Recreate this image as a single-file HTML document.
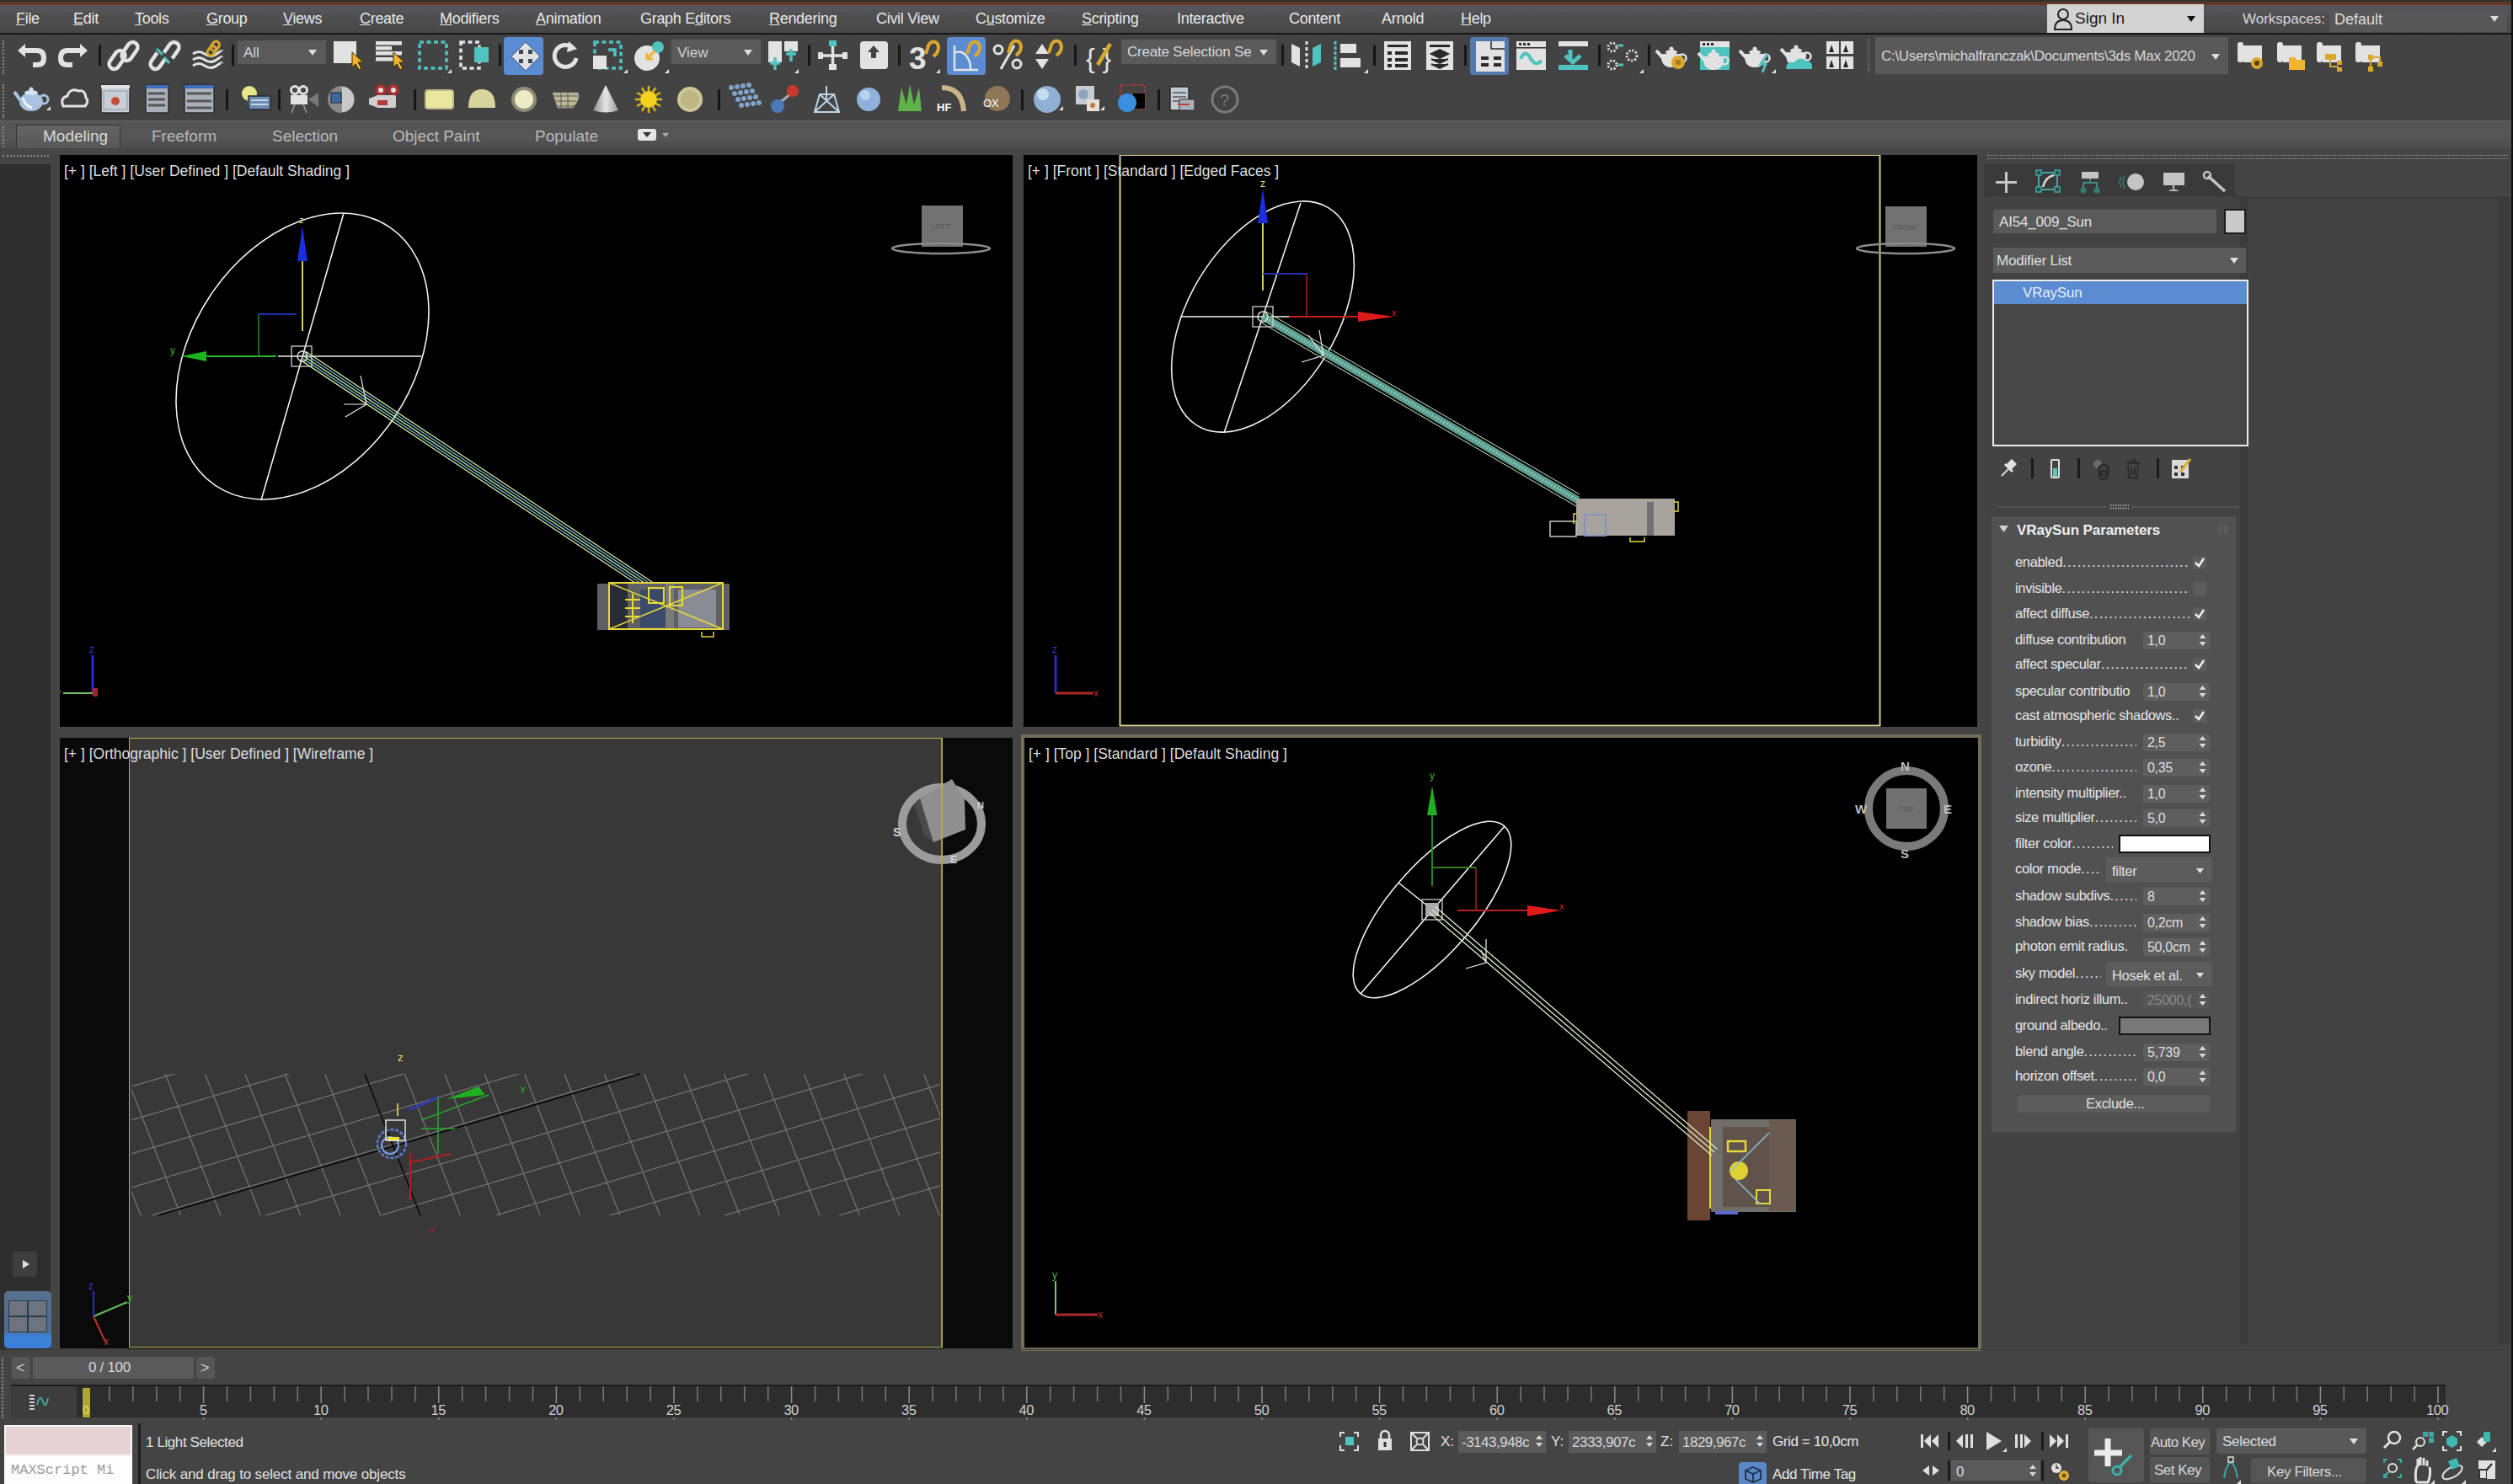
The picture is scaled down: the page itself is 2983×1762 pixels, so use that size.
<!DOCTYPE html>
<html><head><meta charset="utf-8">
<style>
*{margin:0;padding:0;box-sizing:border-box}
html,body{width:2983px;height:1762px;overflow:hidden;background:#444444;font-family:"Liberation Sans",sans-serif;color:#dcdcdc;position:relative}
.a{position:absolute}
.t{position:absolute;white-space:pre;line-height:1}
.vp{position:absolute;background:#000;overflow:hidden}
.lbl{position:absolute;white-space:pre;font-size:17px;color:#dedede;line-height:1}
.sep{position:absolute;width:3px;height:28px;background:#1c1c1c}
svg{position:absolute;overflow:visible}

</style></head>
<body>
<!-- top stripe -->
<div class="a" style="left:0;top:0;width:2983px;height:2px;background:#2f3230"></div>
<div class="a" style="left:0;top:2px;width:2983px;height:4px;background:#643722"></div>
<div class="a" style="left:0;top:6px;width:2983px;height:8px;background:#55545a"></div>
<div class="a" style="left:0;top:14px;width:2983px;height:25px;background:linear-gradient(#525252,#464646)"></div>
<div class="a" style="left:0;top:39px;width:2983px;height:2px;background:#161616"></div>
<div class="a" style="left:0;top:41px;width:2983px;height:102px;background:#434343"></div>
<div class="a" style="left:0;top:143px;width:2983px;height:32px;background:linear-gradient(#5e5e5e 0,#5e5e5e 2px,#555 2px,#555 25px,#4f4f4f 25px)"></div><div class="a" style="left:0;top:175px;width:2983px;height:9px;background:#474747"></div>
<!-- toolbar grips -->
<div class="a" style="left:3px;top:48px;width:4px;height:40px;border-left:2px dotted #8a8a8a"></div>
<div class="a" style="left:3px;top:100px;width:4px;height:40px;border-left:2px dotted #8a8a8a"></div>
<div class="a" style="left:3px;top:150px;width:4px;height:25px;border-left:2px dotted #8a8a8a"></div>
<div class="a" style="left:3px;top:184px;width:55px;height:5px;border-top:2px dotted #8a8a8a"></div>
<!-- left panel -->
<div class="a" style="left:0;top:195px;width:60px;height:1407px;background:#2e2e2e"></div>
<!-- play button -->
<div class="a" style="left:15px;top:1486px;width:29px;height:30px;background:#3e3e3e;border-radius:3px"></div>
<svg style="left:15px;top:1486px" width="29" height="30"><path d="M12 10 L20 15 L12 20 Z" fill="#e0e0e0"/></svg>
<!-- viewport layout button -->
<div class="a" style="left:5px;top:1533px;width:56px;height:68px;background:linear-gradient(#56708f,#4f6c92 70%,#3d80d8 78%,#3d80d8);border-radius:5px"></div>
<div class="a" style="left:10px;top:1544px;width:23px;height:19px;background:#6d7480;border:1px solid #2d3a4c"></div>
<div class="a" style="left:33px;top:1544px;width:23px;height:19px;background:#6d7480;border:1px solid #2d3a4c"></div>
<div class="a" style="left:10px;top:1563px;width:23px;height:19px;background:#6d7480;border:1px solid #2d3a4c"></div>
<div class="a" style="left:33px;top:1563px;width:23px;height:19px;background:#6d7480;border:1px solid #2d3a4c"></div>

<div class="t" style="left:19px;top:13px;font-size:18px;color:#e8e8e8;letter-spacing:-0.3px"><u>F</u>ile</div>
<div class="t" style="left:87px;top:13px;font-size:18px;color:#e8e8e8;letter-spacing:-0.3px"><u>E</u>dit</div>
<div class="t" style="left:160px;top:13px;font-size:18px;color:#e8e8e8;letter-spacing:-0.3px"><u>T</u>ools</div>
<div class="t" style="left:245px;top:13px;font-size:18px;color:#e8e8e8;letter-spacing:-0.3px"><u>G</u>roup</div>
<div class="t" style="left:336px;top:13px;font-size:18px;color:#e8e8e8;letter-spacing:-0.3px"><u>V</u>iews</div>
<div class="t" style="left:427px;top:13px;font-size:18px;color:#e8e8e8;letter-spacing:-0.3px"><u>C</u>reate</div>
<div class="t" style="left:522px;top:13px;font-size:18px;color:#e8e8e8;letter-spacing:-0.3px"><u>M</u>odifiers</div>
<div class="t" style="left:636px;top:13px;font-size:18px;color:#e8e8e8;letter-spacing:-0.3px"><u>A</u>nimation</div>
<div class="t" style="left:760px;top:13px;font-size:18px;color:#e8e8e8;letter-spacing:-0.3px">Graph E<u>d</u>itors</div>
<div class="t" style="left:913px;top:13px;font-size:18px;color:#e8e8e8;letter-spacing:-0.3px"><u>R</u>endering</div>
<div class="t" style="left:1040px;top:13px;font-size:18px;color:#e8e8e8;letter-spacing:-0.3px">Civil View</div>
<div class="t" style="left:1158px;top:13px;font-size:18px;color:#e8e8e8;letter-spacing:-0.3px">C<u>u</u>stomize</div>
<div class="t" style="left:1284px;top:13px;font-size:18px;color:#e8e8e8;letter-spacing:-0.3px"><u>S</u>cripting</div>
<div class="t" style="left:1397px;top:13px;font-size:18px;color:#e8e8e8;letter-spacing:-0.3px">Interactive</div>
<div class="t" style="left:1530px;top:13px;font-size:18px;color:#e8e8e8;letter-spacing:-0.3px">Content</div>
<div class="t" style="left:1640px;top:13px;font-size:18px;color:#e8e8e8;letter-spacing:-0.3px">Arnold</div>
<div class="t" style="left:1734px;top:13px;font-size:18px;color:#e8e8e8;letter-spacing:-0.3px"><u>H</u>elp</div>
<!-- sign in -->
<div class="a" style="left:2430px;top:5px;width:186px;height:34px;background:#d2d2d2"></div>
<svg style="left:2436px;top:7px" width="26" height="30"><circle cx="13" cy="10" r="6" fill="none" stroke="#222" stroke-width="2"/><path d="M3 28 Q3 17 13 17 Q23 17 23 28 Z" fill="none" stroke="#222" stroke-width="2"/></svg>
<div class="t" style="left:2463px;top:12px;font-size:19px;color:#1a1a1a">Sign In</div>
<svg style="left:2596px;top:19px" width="10" height="8"><path d="M0 0 L10 0 L5 7 Z" fill="#111"/></svg>
<div class="t" style="left:2662px;top:14px;font-size:17px;color:#d8d8d8">Workspaces:</div>
<div class="a" style="left:2765px;top:13px;width:211px;height:25px;background:#575757"></div>
<div class="t" style="left:2771px;top:14px;font-size:18px;color:#dcdcdc">Default</div>
<svg style="left:2956px;top:19px" width="10" height="8"><path d="M0 0 L10 0 L5 7 Z" fill="#ddd"/></svg>

<svg style="left:0;top:0" width="2983" height="143"><rect x="117" y="53" width="3" height="25" fill="#161616"/><rect x="275" y="53" width="3" height="25" fill="#161616"/><rect x="592" y="53" width="3" height="25" fill="#161616"/><rect x="959" y="53" width="3" height="25" fill="#161616"/><rect x="1066" y="53" width="3" height="25" fill="#161616"/><rect x="1275" y="53" width="3" height="25" fill="#161616"/><rect x="1521" y="53" width="3" height="25" fill="#161616"/><rect x="1630" y="53" width="3" height="25" fill="#161616"/><rect x="1738" y="53" width="3" height="25" fill="#161616"/><rect x="1897" y="53" width="3" height="25" fill="#161616"/><rect x="1956" y="53" width="3" height="25" fill="#161616"/><path d="M29 60 H44 Q52 60 52 69 Q52 77 44 77 H39" fill="none" stroke="#e2e2e2" stroke-width="6"/><path d="M21 60 L30 52 L30 68 Z" fill="#e2e2e2"/><path d="M96 60 H80 Q72 60 72 69 Q72 77 80 77 H86" fill="none" stroke="#e2e2e2" stroke-width="6"/><path d="M104 60 L95 52 L95 68 Z" fill="#e2e2e2"/><g transform="rotate(-55 154 61)"><rect x="142" y="55" width="24" height="12" rx="6" fill="none" stroke="#e2e2e2" stroke-width="4.5"/></g><g transform="rotate(-55 139 71)"><rect x="127" y="65" width="24" height="12" rx="6" fill="none" stroke="#e2e2e2" stroke-width="4.5"/></g><g transform="rotate(-55 203 61)"><path d="M197 55 H209 A6 6 0 0 1 209 67 H197" fill="none" stroke="#e2e2e2" stroke-width="4.5"/></g><g transform="rotate(-55 188 71)"><path d="M194 65 H182 A6 6 0 0 0 182 77 H194" fill="none" stroke="#e2e2e2" stroke-width="4.5"/></g><path d="M186 58 L193 65 M195 68 L201 75" stroke="#4fc3c0" stroke-width="3"/><path d="M229 64 Q236 59 243 64 T257 64 T263 61" fill="none" stroke="#e2e2e2" stroke-width="3"/><path d="M229 71 Q236 66 243 71 T257 71 T263 68" fill="none" stroke="#e2e2e2" stroke-width="3"/><path d="M229 78 Q236 73 243 78 T257 78 T263 75" fill="none" stroke="#e2e2e2" stroke-width="3"/><g transform="rotate(-55 253 58)"><rect x="244" y="54" width="12" height="8" rx="4" fill="none" stroke="#d9a72e" stroke-width="3"/><rect x="251" y="54" width="12" height="8" rx="4" fill="none" stroke="#d9a72e" stroke-width="3"/></g><rect x="396" y="49" width="27" height="26" fill="#e2e2e2"/><path d="M418 62 L418 80 L422 76 L426 83 L429 81 L425 74 L431 74 Z" fill="#f1b431" stroke="#3a2a00" stroke-width="1"/><rect x="446" y="49" width="31" height="4.5" fill="#e2e2e2"/><rect x="446" y="55" width="19" height="4.5" fill="#e2e2e2"/><rect x="446" y="61" width="31" height="4.5" fill="#e2e2e2"/><rect x="446" y="68" width="22" height="4.5" fill="#e2e2e2"/><path d="M467 62 L467 80 L471 76 L475 83 L478 81 L474 74 L480 74 Z" fill="#f1b431" stroke="#3a2a00" stroke-width="1"/><rect x="498" y="50" width="32" height="31" fill="none" stroke="#4fc3c0" stroke-width="3.5" stroke-dasharray="5 3.5"/><path d="M531 87 L536 82 L536 87 Z" fill="#e2e2e2"/><rect x="547" y="50" width="22" height="31" fill="none" stroke="#e2e2e2" stroke-width="3.5" stroke-dasharray="5 3.5"/><rect x="563" y="56" width="17" height="18" fill="#4fc3c0"/><rect x="598" y="44" width="47" height="45" rx="4" fill="#5b8bd3"/><path d="M624 50 L641 67 L624 84 L607 67 Z" fill="#e2e2e2" stroke="#35507a" stroke-width="1"/><rect x="616" y="59" width="5" height="5" fill="#3d4a5c"/><rect x="627" y="59" width="5" height="5" fill="#3d4a5c"/><rect x="616" y="70" width="5" height="5" fill="#3d4a5c"/><rect x="627" y="70" width="5" height="5" fill="#3d4a5c"/><path d="M679 56 A13 13 0 1 0 684 69" fill="none" stroke="#e2e2e2" stroke-width="5"/><path d="M675 49 L685 58 L673 62 Z" fill="#e2e2e2"/><rect x="706" y="50" width="31" height="31" fill="none" stroke="#4fc3c0" stroke-width="3.5" stroke-dasharray="5 3.5"/><rect x="704" y="66" width="16" height="16" fill="#e2e2e2"/><path d="M722 59 H730 V67" fill="none" stroke="#4fc3c0" stroke-width="3.5"/><path d="M740 87 L745 82 L745 87 Z" fill="#e2e2e2"/><circle cx="768" cy="69" r="15" fill="#e2e2e2"/><circle cx="781" cy="56" r="7" fill="#4fc3c0"/><path d="M778 60 L769 69 M768 63 L768 70 L775 70" fill="none" stroke="#f1b431" stroke-width="3"/><path d="M789 87 L794 82 L794 87 Z" fill="#e2e2e2"/><rect x="912" y="49" width="16" height="25" fill="#e2e2e2"/><rect x="931" y="49" width="16" height="12" fill="#e2e2e2"/><path d="M920 68 V83 M914 75 H926 M939 58 V73 M933 64 H945" stroke="#4fc3c0" stroke-width="3.5"/><path d="M943 87 L948 82 L948 87 Z" fill="#e2e2e2"/><path d="M971 66 H1006 M988.5 49 V82" stroke="#e2e2e2" stroke-width="3.5"/><rect x="971" y="62" width="6" height="8" fill="#e2e2e2"/><rect x="1000" y="62" width="6" height="8" fill="#e2e2e2"/><rect x="984" y="76" width="9" height="7" fill="#e2e2e2"/><rect x="984" y="48" width="9" height="7" fill="#4fc3c0"/><rect x="1021" y="49" width="33" height="33" rx="4" fill="#e2e2e2"/><path d="M1037 54 L1044 62 H1040 V69 H1034 V62 H1030 Z" fill="#444"/><text x="1079" y="82" font-family="Liberation Sans" font-weight="bold" font-size="37" fill="#e2e2e2">3</text><path d="M1099 64 L1102 54 Q1106 47 1112 51 Q1116 56 1112 63 L1108 67" fill="none" stroke="#d9a72e" stroke-width="4"/><path d="M1111 87 L1116 82 L1116 87 Z" fill="#e2e2e2"/><rect x="1124" y="44" width="46" height="45" rx="4" fill="#5b8bd3"/><path d="M1133 54 V83 H1161 M1133 63 A14 20 0 0 1 1152 83" fill="none" stroke="#e2e2e2" stroke-width="2.5"/><path d="M1148 64 L1151 54 Q1155 47 1161 51 Q1165 56 1161 63 L1157 67" fill="none" stroke="#d9a72e" stroke-width="4"/><circle cx="1185" cy="59" r="5" fill="none" stroke="#e2e2e2" stroke-width="3"/><circle cx="1207" cy="76" r="5" fill="none" stroke="#e2e2e2" stroke-width="3"/><path d="M1188 82 L1204 54" stroke="#e2e2e2" stroke-width="3"/><path d="M1197 63 L1200 53 Q1204 46 1210 50 Q1214 55 1210 62 L1206 66" fill="none" stroke="#d9a72e" stroke-width="4"/><path d="M1229 64 L1237 52 L1245 64 Z M1229 70 L1245 70 L1237 82 Z" fill="#e2e2e2"/><path d="M1245 63 L1248 53 Q1252 46 1258 50 Q1262 55 1258 62 L1254 66" fill="none" stroke="#d9a72e" stroke-width="4"/><text x="1289" y="80" font-family="Liberation Sans" font-size="32" fill="#e2e2e2">{ }</text><path d="M1303 77 L1318 52" stroke="#d9a72e" stroke-width="4.5"/><path d="M1533 52 L1543 57 V79 L1533 74 Z" fill="#e2e2e2"/><path d="M1551 49 V83" stroke="#e2e2e2" stroke-width="3" stroke-dasharray="4 3"/><path d="M1568 52 L1558 57 V79 L1568 74 Z" fill="#4fc3c0"/><path d="M1585 49 V84" stroke="#4fc3c0" stroke-width="3" stroke-dasharray="4 2"/><rect x="1591" y="52" width="19" height="11" fill="#e2e2e2"/><rect x="1591" y="69" width="24" height="11" fill="#e2e2e2"/><path d="M1619 87 L1624 82 L1624 87 Z" fill="#e2e2e2"/><rect x="1643" y="49" width="32" height="34" fill="#e2e2e2"/><rect x="1647" y="53" width="24" height="3" fill="#2a2a2a"/><rect x="1647" y="61" width="5" height="4" fill="#2a2a2a"/><rect x="1656" y="61" width="15" height="4" fill="#2a2a2a"/><rect x="1647" y="69" width="5" height="4" fill="#2a2a2a"/><rect x="1656" y="69" width="15" height="4" fill="#2a2a2a"/><rect x="1647" y="76" width="5" height="4" fill="#2a2a2a"/><rect x="1656" y="76" width="15" height="4" fill="#2a2a2a"/><rect x="1693" y="49" width="32" height="34" fill="#e2e2e2"/><rect x="1697" y="53" width="24" height="3" fill="#2a2a2a"/><path d="M1699 64 L1709 59 L1719 64 L1709 69 Z M1699 70 L1709 75 L1719 70 M1699 76 L1709 81 L1719 76" fill="#2a2a2a" stroke="#2a2a2a" stroke-width="2"/><rect x="1745" y="44" width="46" height="45" rx="4" fill="#5479b0"/><rect x="1752" y="49" width="34" height="36" fill="#e2e2e2"/><path d="M1770 49 V58 H1786" fill="none" stroke="#2a2a2a" stroke-width="1.5"/><rect x="1758" y="67" width="9" height="4" fill="#2a2a2a"/><rect x="1773" y="67" width="9" height="4" fill="#2a2a2a"/><rect x="1758" y="75" width="9" height="4" fill="#2a2a2a"/><rect x="1773" y="75" width="9" height="4" fill="#2a2a2a"/><rect x="1800" y="49" width="35" height="34" fill="#e2e2e2"/><rect x="1800" y="56" width="35" height="1.5" fill="#2a2a2a"/><rect x="1803" y="51" width="3" height="3" fill="#2a2a2a"/><rect x="1808" y="51" width="3" height="3" fill="#2a2a2a"/><rect x="1813" y="51" width="3" height="3" fill="#2a2a2a"/><path d="M1805 70 Q1810 58 1816 68 Q1822 80 1830 72" fill="none" stroke="#4fc3c0" stroke-width="4"/><rect x="1850" y="49" width="35" height="6" fill="#e2e2e2"/><path d="M1864 59 V71 M1858 66 L1867 74 L1876 66" fill="none" stroke="#4fc3c0" stroke-width="5"/><rect x="1850" y="77" width="35" height="6" fill="#4fc3c0"/><circle cx="1914" cy="56" r="5" fill="none" stroke="#e2e2e2" stroke-width="3" stroke-dasharray="2 2"/><circle cx="1914" cy="77" r="5" fill="none" stroke="#e2e2e2" stroke-width="3" stroke-dasharray="2 2"/><circle cx="1937" cy="66" r="6" fill="none" stroke="#e2e2e2" stroke-width="3" stroke-dasharray="2 2"/><path d="M1921 54 H1927 M1921 77 H1927" stroke="#4fc3c0" stroke-width="3"/><path d="M1946 87 L1951 82 L1951 87 Z" fill="#e2e2e2"/><path d="M1972 64 H1996 Q1997 80 1984 80 Q1971 80 1972 64 Z" fill="#e2e2e2"/><path d="M1974 69 L1966 60" stroke="#e2e2e2" stroke-width="4"/><circle cx="1997" cy="69" r="4.5" fill="none" stroke="#e2e2e2" stroke-width="2.5"/><ellipse cx="1984" cy="62" rx="7" ry="3" fill="#e2e2e2"/><circle cx="1984" cy="58" r="2.5" fill="#e2e2e2"/><circle cx="1992" cy="74" r="8" fill="#d9a72e"/><circle cx="1992" cy="74" r="3" fill="#9e7a20"/><rect x="2018" y="49" width="35" height="34" fill="#4fc3c0"/><rect x="2018" y="49" width="35" height="7" fill="#e2e2e2"/><rect x="2021" y="51" width="3" height="3" fill="#2a2a2a"/><rect x="2026" y="51" width="3" height="3" fill="#2a2a2a"/><rect x="2031" y="51" width="3" height="3" fill="#2a2a2a"/><path d="M2022 67 H2046 Q2047 83 2034 83 Q2021 83 2022 67 Z" fill="#e2e2e2"/><path d="M2024 72 L2016 63" stroke="#e2e2e2" stroke-width="4"/><circle cx="2047" cy="72" r="4.5" fill="none" stroke="#e2e2e2" stroke-width="2.5"/><ellipse cx="2034" cy="65" rx="7" ry="3" fill="#e2e2e2"/><circle cx="2034" cy="61" r="2.5" fill="#e2e2e2"/><path d="M2071 64 H2095 Q2096 80 2083 80 Q2070 80 2071 64 Z" fill="#e2e2e2"/><path d="M2073 69 L2065 60" stroke="#e2e2e2" stroke-width="4"/><circle cx="2096" cy="69" r="4.5" fill="none" stroke="#e2e2e2" stroke-width="2.5"/><ellipse cx="2083" cy="62" rx="7" ry="3" fill="#e2e2e2"/><circle cx="2083" cy="58" r="2.5" fill="#e2e2e2"/><path d="M2098 64 L2090 76 H2096 L2092 86" fill="none" stroke="#4fc3c0" stroke-width="3"/><path d="M2103 87 L2108 82 L2108 87 Z" fill="#e2e2e2"/><path d="M2120 62 H2144 Q2145 78 2132 78 Q2119 78 2120 62 Z" fill="#e2e2e2"/><path d="M2122 67 L2114 58" stroke="#e2e2e2" stroke-width="4"/><circle cx="2145" cy="67" r="4.5" fill="none" stroke="#e2e2e2" stroke-width="2.5"/><ellipse cx="2132" cy="60" rx="7" ry="3" fill="#e2e2e2"/><circle cx="2132" cy="56" r="2.5" fill="#e2e2e2"/><path d="M2120 82 Q2120 72 2130 74 Q2136 66 2144 72 Q2152 72 2151 82 Z" fill="#4fc3c0"/><rect x="2168" y="49" width="15" height="15" fill="#e2e2e2"/><path d="M2171 62 L2174 53 L2177 62 Z" fill="#2a2a2a"/><rect x="2168" y="67" width="15" height="15" fill="#e2e2e2"/><path d="M2171 80 L2174 71 L2177 80 Z" fill="#2a2a2a"/><rect x="2185" y="49" width="15" height="15" fill="#e2e2e2"/><path d="M2188 62 L2191 53 L2194 62 Z" fill="#2a2a2a"/><rect x="2185" y="67" width="15" height="15" fill="#e2e2e2"/><path d="M2188 80 L2191 71 L2194 80 Z" fill="#2a2a2a"/><path d="M2218 46 V86" stroke="#888" stroke-width="2" stroke-dasharray="1 2"/><rect x="2656" y="50" width="7" height="24" rx="3" fill="#e2e2e2"/><rect x="2663" y="54" width="22" height="20" fill="#e2e2e2"/><circle cx="2679" cy="75" r="7" fill="#d9a72e"/><circle cx="2679" cy="75" r="3" fill="#5a4010"/><rect x="2703" y="50" width="7" height="24" rx="3" fill="#e2e2e2"/><rect x="2710" y="54" width="22" height="20" fill="#e2e2e2"/><path d="M2717 68 H2724 L2726 71 H2736 V83 H2717 Z" fill="#f1b431"/><rect x="2750" y="50" width="7" height="24" rx="3" fill="#e2e2e2"/><rect x="2757" y="54" width="22" height="20" fill="#e2e2e2"/><rect x="2760" y="64" width="13" height="7" fill="#d9a72e"/><path d="M2766 71 V79 H2776" fill="none" stroke="#d9a72e" stroke-width="2"/><rect x="2774" y="72" width="6" height="5" fill="#d9a72e"/><rect x="2774" y="80" width="6" height="5" fill="#d9a72e"/><rect x="2796" y="50" width="7" height="24" rx="3" fill="#e2e2e2"/><rect x="2803" y="54" width="22" height="20" fill="#e2e2e2"/><rect x="2811" y="65" width="6" height="6" fill="#d9a72e"/><path d="M2814 71 V80 M2817 68 H2825 V74" fill="none" stroke="#d9a72e" stroke-width="2"/><rect x="2822" y="73" width="6" height="6" fill="#d9a72e"/><rect x="2811" y="79" width="6" height="6" fill="#d9a72e"/><rect x="268" y="106" width="3" height="25" fill="#161616"/><rect x="330" y="106" width="3" height="25" fill="#161616"/><rect x="491" y="106" width="3" height="25" fill="#161616"/><rect x="852" y="106" width="3" height="25" fill="#161616"/><rect x="1212" y="106" width="3" height="25" fill="#161616"/><rect x="1374" y="106" width="3" height="25" fill="#161616"/><ellipse cx="37" cy="121" rx="14" ry="11" fill="#a9c2e0"/><path d="M27 116 Q30 126 38 128" fill="none" stroke="#eef5fc" stroke-width="3"/><path d="M25 120 L17 109" stroke="#a9c2e0" stroke-width="4"/><circle cx="52" cy="118" r="5" fill="none" stroke="#a9c2e0" stroke-width="3"/><ellipse cx="37" cy="110" rx="8" ry="3" fill="#d5e3f2"/><circle cx="37" cy="106" r="2.5" fill="#d5e3f2"/><path d="M55 131 L60 126 L60 131 Z" fill="#e2e2e2"/><path d="M75 126 Q71 116 80 114 Q83 104 93 108 Q101 106 102 116 Q106 120 101 126 Z" fill="none" stroke="#e2e2e2" stroke-width="3"/><rect x="120" y="101" width="34" height="33" fill="#c9ced6" stroke="#2b2b2b" stroke-width="1.5"/><rect x="120" y="101" width="34" height="4" fill="#dfe3e8"/><circle cx="137" cy="120" r="5" fill="#c44d3a"/><rect x="123" y="108" width="28" height="22" fill="none" stroke="#8e96a4" stroke-width="1"/><rect x="173" y="101" width="27" height="33" fill="#aab0ba" stroke="#2b2b2b" stroke-width="1.5"/><rect x="173" y="101" width="27" height="4" fill="#3c6db8"/><path d="M176 111 H196 M176 118 H196 M176 125 H196" stroke="#555" stroke-width="3"/><rect x="219" y="101" width="35" height="33" fill="#aab0ba" stroke="#2b2b2b" stroke-width="1.5"/><rect x="219" y="101" width="35" height="4" fill="#3c6db8"/><path d="M222 111 H251 M222 120 H251 M222 128 H251" stroke="#555" stroke-width="3"/><circle cx="296" cy="111" r="9" fill="#e8e58a"/><rect x="294" y="120" width="6" height="6" fill="#bbb"/><rect x="295" y="114" width="26" height="16" fill="#6a8db5" stroke="#2b2b2b" stroke-width="1.5"/><path d="M298 119 H318 M298 124 H318" stroke="#c9d4e0" stroke-width="2"/><circle cx="350" cy="107" r="4.5" fill="none" stroke="#e2e2e2" stroke-width="3"/><circle cx="360" cy="107" r="4.5" fill="none" stroke="#e2e2e2" stroke-width="3"/><rect x="345" y="113" width="20" height="11" fill="#e2e2e2"/><path d="M366 118 L378 110 V127 Z" fill="#7a7a7a"/><path d="M350 124 L346 134 M360 124 L364 134" stroke="#999" stroke-width="1.5"/><path d="M405 102 A16 16 0 0 1 405 134 Z" fill="#c8c8c8" stroke="#555" stroke-width="1"/><path d="M405 102 A16 16 0 0 0 405 134" fill="#888"/><rect x="393" y="110" width="12" height="12" fill="#3a6aa0" stroke="#222"/><circle cx="452" cy="107" r="7" fill="#a82f2f"/><circle cx="467" cy="107" r="7" fill="#a82f2f"/><circle cx="452" cy="107" r="3" fill="#e0e0e0"/><circle cx="467" cy="107" r="3" fill="#e0e0e0"/><rect x="446" y="113" width="24" height="15" rx="2" fill="#cfcfcf"/><rect x="448" y="119" width="12" height="6" fill="#b93a3a"/><path d="M438 117 L446 114 V127 L438 124 Z" fill="#cfcfcf"/><rect x="505" y="107" width="33" height="22" rx="3" fill="#e9e6a0" stroke="#bdb98a" stroke-width="2"/><path d="M556 128 Q556 106 572 106 Q588 106 588 128 Z" fill="#d7d59b"/><circle cx="622" cy="118" r="15" fill="#8f8e78"/><circle cx="622" cy="118" r="11" fill="#ecebc4"/><path d="M656 110 L662 128 H680 Q690 116 686 110 Z" fill="#bfbc95" stroke="#888" stroke-width="1"/><path d="M658 114 H686 M660 120 H684 M662 126 H682 M666 110 V128 M674 110 V128" stroke="#555" stroke-width="1"/><defs><linearGradient id="cg" x1="0" x2="1"><stop offset="0" stop-color="#8a8a8a"/><stop offset="0.5" stop-color="#e6e6e6"/><stop offset="1" stop-color="#9a9a9a"/></linearGradient></defs><path d="M704 131 L719 101 L734 131 Q719 136 704 131 Z" fill="url(#cg)"/><path d="M780.0 118.0 L786.0 118.0 M778.7 123.0 L783.9 126.0 M775.0 126.7 L778.0 131.9 M770.0 128.0 L770.0 134.0 M765.0 126.7 L762.0 131.9 M761.3 123.0 L756.1 126.0 M760.0 118.0 L754.0 118.0 M761.3 113.0 L756.1 110.0 M765.0 109.3 L762.0 104.1 M770.0 108.0 L770.0 102.0 M775.0 109.3 L778.0 104.1 M778.7 113.0 L783.9 110.0 " stroke="#d8b818" stroke-width="2.5"/><circle cx="770" cy="118" r="10" fill="#f5d21e"/><circle cx="819" cy="118" r="15" fill="#cdc79a"/><circle cx="819" cy="118" r="11" fill="#beb685"/><circle cx="868" cy="104" r="3" fill="#7fa3c9"/><circle cx="872" cy="111" r="3" fill="#7fa3c9"/><circle cx="876" cy="118" r="3" fill="#7fa3c9"/><circle cx="880" cy="125" r="3" fill="#7fa3c9"/><circle cx="875" cy="103" r="3" fill="#7fa3c9"/><circle cx="879" cy="110" r="3" fill="#7fa3c9"/><circle cx="883" cy="117" r="3" fill="#7fa3c9"/><circle cx="887" cy="124" r="3" fill="#7fa3c9"/><circle cx="882" cy="102" r="3" fill="#7fa3c9"/><circle cx="886" cy="109" r="3" fill="#7fa3c9"/><circle cx="890" cy="116" r="3" fill="#7fa3c9"/><circle cx="894" cy="123" r="3" fill="#7fa3c9"/><circle cx="889" cy="101" r="3" fill="#7fa3c9"/><circle cx="893" cy="108" r="3" fill="#7fa3c9"/><circle cx="897" cy="115" r="3" fill="#7fa3c9"/><circle cx="901" cy="122" r="3" fill="#7fa3c9"/><path d="M921 126 L940 110" stroke="#aaa" stroke-width="3"/><circle cx="923" cy="126" r="8" fill="#4a79b8"/><circle cx="941" cy="108" r="7" fill="#c93a2d"/><path d="M967 133 L973 112 H990 L996 133 Z M967 133 L990 112 M973 112 L996 133 M981 102 V120" fill="none" stroke="#bcd3e8" stroke-width="2"/><circle cx="1031" cy="118" r="14" fill="#8fb2dc"/><circle cx="1027" cy="113" r="6" fill="#b9d2ee"/><path d="M1066 132 L1070 104 L1076 124 L1080 100 L1085 124 L1091 104 L1094 132 Z" fill="#5fb14a"/><path d="M1118 104 Q1142 104 1144 132" fill="none" stroke="#c9b48a" stroke-width="6"/><text x="1112" y="132" font-family="Liberation Sans" font-weight="bold" font-size="13" fill="#fff">HF</text><circle cx="1184" cy="117" r="15" fill="#8f7656"/><text x="1167" y="127" font-family="Liberation Sans" font-size="13" fill="#fff">OX</text><circle cx="1243" cy="118" r="16" fill="#8fb0d2"/><circle cx="1238" cy="112" r="7" fill="#c8dcf0"/><path d="M1257 131 L1262 126 L1262 131 Z" fill="#e2e2e2"/><rect x="1277" y="102" width="22" height="22" fill="#c7ccd2"/><circle cx="1286" cy="112" r="6" fill="#8ea4c0"/><rect x="1290" y="118" width="15" height="14" fill="#e6e0d8"/><circle cx="1297" cy="125" r="3" fill="#c47a3a"/><path d="M1306 131 L1311 126 L1311 131 Z" fill="#e2e2e2"/><rect x="1330" y="101" width="29" height="28" fill="none" stroke="#c23b3b" stroke-width="1.5" stroke-dasharray="3 2"/><rect x="1345" y="111" width="14" height="18" fill="#000"/><circle cx="1338" cy="122" r="11" fill="#3b8ee0"/><rect x="1389" y="103" width="22" height="28" fill="#c4cad2" stroke="#2b2b2b" stroke-width="1.5"/><path d="M1392 110 H1408 M1392 115 H1408 M1392 120 H1408" stroke="#556" stroke-width="1.5"/><rect x="1400" y="118" width="18" height="13" fill="#a8b0ba" stroke="#2b2b2b"/><path d="M1412 124 H1398" stroke="#c23b3b" stroke-width="2"/><circle cx="1454" cy="118" r="15" fill="none" stroke="#7a7a7a" stroke-width="3"/><text x="1448" y="126" font-family="Liberation Sans" font-size="20" fill="#7a7a7a">?</text></svg>

<div class="a" style="left:282px;top:48px;width:105px;height:28px;background:#5a5a5a"></div>
<div class="t" style="left:289px;top:54px;font-size:17px;color:#d4d4d4">All</div>
<svg style="left:366px;top:59px" width="10" height="8"><path d="M0 0 L10 0 L5 7 Z" fill="#ddd"/></svg>
<div class="a" style="left:797px;top:47px;width:106px;height:29px;background:#5a5a5a"></div>
<div class="t" style="left:804px;top:54px;font-size:17px;color:#d0d0d0">View</div>
<svg style="left:883px;top:59px" width="10" height="8"><path d="M0 0 L10 0 L5 7 Z" fill="#ddd"/></svg>
<div class="a" style="left:1331px;top:47px;width:184px;height:29px;background:#5a5a5a"></div>
<div class="t" style="left:1338px;top:53px;font-size:17px;color:#d8d8d8;letter-spacing:-0.2px">Create Selection Se</div>
<svg style="left:1495px;top:59px" width="10" height="8"><path d="M0 0 L10 0 L5 7 Z" fill="#ddd"/></svg>
<div class="a" style="left:2226px;top:44px;width:419px;height:44px;background:#595959"></div>
<div class="t" style="left:2233px;top:58px;font-size:17px;color:#d8d8d8;letter-spacing:-0.3px">C:\Users\michalfranczak\Documents\3ds Max 2020</div>
<svg style="left:2625px;top:64px" width="10" height="8"><path d="M0 0 L10 0 L5 7 Z" fill="#ddd"/></svg>

<div class="a" style="left:19px;top:148px;width:124px;height:28px;background:linear-gradient(#646464,#575757);border:1px solid #353535;border-bottom:none"></div>
<div class="t" style="left:51px;top:152px;font-size:19px;color:#dadada">Modeling</div>
<div class="t" style="left:180px;top:152px;font-size:19px;color:#b9b9b9">Freeform</div>
<div class="t" style="left:323px;top:152px;font-size:19px;color:#b9b9b9">Selection</div>
<div class="t" style="left:466px;top:152px;font-size:19px;color:#b9b9b9">Object Paint</div>
<div class="t" style="left:635px;top:152px;font-size:19px;color:#b9b9b9">Populate</div>
<div class="a" style="left:757px;top:153px;width:22px;height:14px;background:#e6e6e6;border-radius:3px"></div>
<svg style="left:763px;top:157px" width="10" height="7"><path d="M0 0 L10 0 L5 6 Z" fill="#333"/></svg>
<svg style="left:786px;top:158px" width="8" height="6"><path d="M0 0 L8 0 L4 5 Z" fill="#aaa"/></svg>

<div class="vp" style="left:71px;top:184px;width:1131px;height:679px"></div>
<div class="vp" style="left:1215px;top:184px;width:1132px;height:679px"></div>
<div class="vp" style="left:71px;top:876px;width:1131px;height:725px;background:#0a0a0a"></div>
<div class="a" style="left:153px;top:876px;width:966px;height:724px;background:#383838;border:1.5px solid #b9b04c"></div>
<div class="a" style="left:1212px;top:872px;width:1140px;height:732px;border:4px solid #736e58;background:#000"></div>
<svg style="left:0;top:0" width="2983" height="1762"><defs><clipPath id="c1"><rect x="71" y="184" width="1131" height="679"/></clipPath><clipPath id="c2"><rect x="1215" y="184" width="1132" height="679"/></clipPath><clipPath id="c3"><rect x="153" y="876" width="966" height="724"/></clipPath><clipPath id="c4"><rect x="1216" y="876" width="1132" height="724"/></clipPath></defs><g clip-path="url(#c1)"><ellipse cx="359" cy="423" rx="185" ry="131" transform="rotate(-56 359 423)" fill="none" stroke="#f0f0f0" stroke-width="1.6"/><path d="M408 253 L310 594 M330 423 H500" stroke="#f0f0f0" stroke-width="1.6"/><path d="M356.25 427.15 L772.25 704.15" stroke="#d8eca0" stroke-width="1.3"/><path d="M357.9 424.66 L773.9 701.66" stroke="#6ab8d8" stroke-width="1.3"/><path d="M359.55 422.17 L775.55 699.17" stroke="#d8eca0" stroke-width="1.3"/><path d="M361.2 419.68 L777.2 696.68" stroke="#6ab8d8" stroke-width="1.3"/><path d="M362.85 417.19 L778.85 694.19" stroke="#d8eca0" stroke-width="1.3"/><path d="M428 446 L435 480 L408 480 M435 480 L410 495" fill="none" stroke="#f0f0f0" stroke-width="1.2"/><path d="M359 393 V310" stroke="#e8e070" stroke-width="1.8"/><path d="M353 310 L359 269 L365 310 Z" fill="#1a2ee0"/><text x="355" y="265" font-family="Liberation Sans" font-size="11" fill="#e8e070">z</text><path d="M328 423 H245" stroke="#2bb52b" stroke-width="1.8"/><path d="M245 417 L215 423 L245 429 Z" fill="#1fb41f"/><text x="202" y="420" font-family="Liberation Sans" font-size="12" fill="#2bb52b">y</text><path d="M307 423 V373 H352" fill="none" stroke="#1d8a1d" stroke-width="1.5"/><path d="M307 373 H352" stroke="#1f2ea8" stroke-width="2"/><rect x="346" y="411" width="24" height="24" fill="none" stroke="#cfcfcf" stroke-width="1.3"/><circle cx="359" cy="423" r="6" fill="none" stroke="#e0e0c0" stroke-width="1.5"/><rect x="709" y="693" width="157" height="55" fill="#5e6066"/><rect x="723" y="693" width="22" height="55" fill="#2a2c35"/><rect x="760" y="700" width="40" height="45" fill="#3a4a6a"/><rect x="805" y="700" width="45" height="45" fill="#8a8c95"/><rect x="790" y="693" width="10" height="55" fill="#7a7a7a"/><rect x="723" y="692" width="135" height="55" fill="none" stroke="#e6d83a" stroke-width="2"/><path d="M723 692 L858 747 M723 747 L858 692" stroke="#e6d83a" stroke-width="1.5"/><path d="M742 712 H760 M742 722 H760 M742 732 H760 M751 705 V740" stroke="#e6d83a" stroke-width="2"/><rect x="770" y="698" width="18" height="18" fill="none" stroke="#e6d83a" stroke-width="2"/><rect x="795" y="697" width="15" height="22" fill="none" stroke="#e6d83a" stroke-width="2"/><path d="M833 750 V756 H847 V750" fill="none" stroke="#e6d83a" stroke-width="1.5"/><rect x="1094" y="244" width="49" height="49" fill="#727272"/><text x="1106" y="272" font-family="Liberation Sans" font-size="9" fill="#555">LEFT</text><ellipse cx="1117" cy="295" rx="58" ry="6" fill="none" stroke="#8a8a8a" stroke-width="2.5"/><path d="M110 823 V778" stroke="#2a2acc" stroke-width="3"/><path d="M110 823 H75" stroke="#6fbf6f" stroke-width="2"/><rect x="110" y="817" width="6" height="10" fill="#aa2222"/><text x="106" y="775" font-family="Liberation Sans" font-size="12" fill="#3a3acc">z</text><text x="66" y="827" font-family="Liberation Sans" font-size="12" fill="#4fae4f">y</text></g><g clip-path="url(#c2)"><rect x="1329.5" y="184" width="902" height="677.5" fill="none" stroke="#d3cf95" stroke-width="2"/><ellipse cx="1499" cy="376" rx="151" ry="88" transform="rotate(-59 1499 376)" fill="none" stroke="#f0f0f0" stroke-width="1.6"/><path d="M1544 241 L1453 514 M1401 376 H1530" stroke="#f0f0f0" stroke-width="1.6"/><path d="M1499 376 L1873 594" stroke="#5a9c8e" stroke-width="9"/><path d="M1499 376 L1873 594" stroke="#8cc4b4" stroke-width="3" stroke-dasharray="2 2"/><path d="M1501 369 L1875 587 M1497 383 L1871 601" stroke="#d0f0c0" stroke-width="1"/><path d="M1566 392 L1571 422 L1545 430 M1571 422 L1553 398" fill="none" stroke="#f0f0f0" stroke-width="1.2"/><path d="M1499 345 V264" stroke="#e8e070" stroke-width="1.8"/><path d="M1493 265 L1499 224 L1505 265 Z" fill="#1a2ee0"/><text x="1496" y="222" font-family="Liberation Sans" font-size="12" fill="#e8e070">z</text><path d="M1530 376 H1612" stroke="#c82020" stroke-width="1.8"/><path d="M1612 370 L1655 376 L1612 382 Z" fill="#e01a1a"/><text x="1652" y="375" font-family="Liberation Sans" font-size="11" fill="#c82020">x</text><path d="M1499 325 H1551 V376" fill="none" stroke="#b02020" stroke-width="1.5"/><path d="M1499 325 H1551" stroke="#2030b0" stroke-width="2"/><rect x="1487" y="364" width="24" height="24" fill="none" stroke="#cfcfcf" stroke-width="1.3"/><circle cx="1499" cy="376" r="6" fill="none" stroke="#e0e0c0" stroke-width="1.5"/><rect x="1871" y="592" width="117" height="44" fill="#a6a49c"/><rect x="1955" y="596" width="8" height="40" fill="#707070"/><rect x="1881" y="611" width="25" height="25" fill="none" stroke="#8a90c0" stroke-width="2"/><rect x="1840" y="619" width="31" height="18" fill="none" stroke="#c8c8c8" stroke-width="1.5"/><path d="M1868 622 V610 H1872 M1987 596 H1992 V607 H1987 M1935 638 V643 H1952 V638" fill="none" stroke="#e6d83a" stroke-width="1.5"/><rect x="2238" y="245" width="49" height="48" fill="#727272"/><text x="2247" y="273" font-family="Liberation Sans" font-size="9" fill="#555">FRONT</text><ellipse cx="2262" cy="295" rx="58" ry="6" fill="none" stroke="#8a8a8a" stroke-width="2.5"/><path d="M1253 823 V778" stroke="#2a2acc" stroke-width="3"/><path d="M1253 823 H1298" stroke="#aa2a2a" stroke-width="3"/><text x="1249" y="775" font-family="Liberation Sans" font-size="12" fill="#3a3acc">z</text><text x="1298" y="827" font-family="Liberation Sans" font-size="12" fill="#b03030">x</text></g><g clip-path="url(#c3)"><clipPath id="gb"><rect x="156" y="1275" width="960" height="168"/></clipPath><g clip-path="url(#gb)" stroke="#767676" stroke-width="1.2"><path d="M-135.8 1275 L-69.9 1443"/><path d="M-88.4 1275 L-22.5 1443"/><path d="M-41.0 1275 L24.9 1443"/><path d="M6.4 1275 L72.3 1443"/><path d="M53.8 1275 L119.7 1443"/><path d="M101.2 1275 L167.1 1443"/><path d="M148.6 1275 L214.5 1443"/><path d="M196.0 1275 L261.9 1443"/><path d="M243.4 1275 L309.3 1443"/><path d="M290.8 1275 L356.7 1443"/><path d="M338.2 1275 L404.1 1443"/><path d="M385.6 1275 L451.5 1443"/><path d="M433.0 1275 L498.9 1443"/><path d="M480.4 1275 L546.3 1443"/><path d="M527.8 1275 L593.7 1443"/><path d="M575.2 1275 L641.1 1443"/><path d="M622.6 1275 L688.5 1443"/><path d="M670.0 1275 L735.9 1443"/><path d="M717.4 1275 L783.3 1443"/><path d="M764.8 1275 L830.7 1443"/><path d="M812.2 1275 L878.1 1443"/><path d="M859.6 1275 L925.5 1443"/><path d="M907.0 1275 L972.9 1443"/><path d="M954.4 1275 L1020.3 1443"/><path d="M1001.8 1275 L1067.7 1443"/><path d="M1049.2 1275 L1115.1 1443"/><path d="M1096.6 1275 L1162.5 1443"/><path d="M1144.0 1275 L1209.9 1443"/><path d="M1191.4 1275 L1257.3 1443"/><path d="M1238.8 1275 L1304.7 1443"/><path d="M1286.2 1275 L1352.1 1443"/><path d="M1333.6 1275 L1399.5 1443"/><path d="M156 1210 L1116 927.8"/><path d="M156 1250 L1116 967.8"/><path d="M156 1290 L1116 1007.8"/><path d="M156 1330 L1116 1047.8"/><path d="M156 1370 L1116 1087.8"/><path d="M156 1410 L1116 1127.8"/><path d="M156 1450 L1116 1167.8"/><path d="M156 1490 L1116 1207.8"/><path d="M156 1530 L1116 1247.8"/><path d="M156 1570 L1116 1287.8"/><path d="M156 1610 L1116 1327.8"/><path d="M156 1650 L1116 1367.8"/><path d="M156 1690 L1116 1407.8"/><path d="M156 1730 L1116 1447.8"/><path d="M156 1770 L1116 1487.8"/><path d="M156 1810 L1116 1527.8"/></g><path d="M188 1443 L760 1275 M433 1275 L499 1443" stroke="#0a0a0a" stroke-width="1.8"/><path d="M485 1318 L520 1303" stroke="#2f3ab0" stroke-width="3"/><path d="M520 1303 V1370 M500 1330 L580 1300 M500 1340 H540" fill="none" stroke="#2aa82a" stroke-width="1.5"/><path d="M530 1305 L568 1290 L576 1300 Z" fill="#20b020"/><text x="618" y="1296" font-family="Liberation Sans" font-size="11" fill="#20c020">y</text><path d="M487 1370 V1425 M487 1380 L535 1370" fill="none" stroke="#b02020" stroke-width="2"/><text x="510" y="1464" font-family="Liberation Sans" font-size="11" fill="#b02020">x</text><text x="472" y="1260" font-family="Liberation Sans" font-size="13" fill="#e8e070">z</text><path d="M472 1310 V1325" stroke="#e8e070" stroke-width="1.5"/><circle cx="465" cy="1358" r="17" fill="none" stroke="#5b7fd8" stroke-width="2.5" stroke-dasharray="4 2"/><circle cx="463" cy="1360" r="10" fill="none" stroke="#7fa0f0" stroke-width="2"/><rect x="460" y="1350" width="14" height="5" fill="#f0e020"/><rect x="458" y="1330" width="23" height="24" fill="none" stroke="#e0e0e0" stroke-width="1.5"/></g><ellipse cx="1118" cy="978" rx="47" ry="43" fill="none" stroke="#9b9b9b" stroke-width="10"/><path d="M1092 948 L1130 925 L1145 950 L1146 985 L1108 1000 L1094 975 Z" fill="#8f8f8f"/><path d="M1092 948 L1108 1000 L1098 993 L1085 955 Z" fill="#4a4a4a"/><text x="1060" y="993" font-family="Liberation Sans" font-weight="bold" font-size="14" fill="#d0d0d0">S</text><text x="1160" y="960" font-family="Liberation Sans" font-weight="bold" font-size="11" fill="#d0d0d0">N</text><text x="1128" y="1025" font-family="Liberation Sans" font-weight="bold" font-size="12" fill="#d0d0d0">E</text><path d="M1118 876 V1600" stroke="#b9b04c" stroke-width="1.5"/><path d="M111 1563 L151 1546" stroke="#5fbf5f" stroke-width="2"/><path d="M111 1563 V1533" stroke="#2a2acc" stroke-width="2"/><path d="M111 1563 L125 1593" stroke="#c03030" stroke-width="2"/><text x="105" y="1531" font-family="Liberation Sans" font-size="12" fill="#3a3acc">z</text><text x="151" y="1545" font-family="Liberation Sans" font-size="12" fill="#4fae4f">y</text><text x="123" y="1597" font-family="Liberation Sans" font-size="12" fill="#c03030">x</text><g clip-path="url(#c4)"><ellipse cx="1700" cy="1080" rx="131" ry="51" transform="rotate(-49.3 1700 1080)" fill="none" stroke="#f0f0f0" stroke-width="1.6"/><path d="M1786 981 L1615 1180 M1660 1048 L1700 1080" stroke="#f0f0f0" stroke-width="1.6"/><path d="M1764 1115 V1143 L1740 1150 M1764 1143 L1758 1128" fill="none" stroke="#f0f0f0" stroke-width="1.2"/><path d="M1700 1052 V968" stroke="#1f9a1f" stroke-width="1.8"/><path d="M1694 968 L1700 933 L1706 968 Z" fill="#1fae1f"/><text x="1697" y="925" font-family="Liberation Sans" font-size="12" fill="#2fb02f">y</text><path d="M1730 1081 H1813" stroke="#b82020" stroke-width="1.8"/><path d="M1813 1075 L1853 1081 L1813 1088 Z" fill="#e01a1a"/><text x="1851" y="1080" font-family="Liberation Sans" font-size="11" fill="#c82020">x</text><path d="M1700 1030 H1752 V1081" fill="none" stroke="#a02020" stroke-width="1.5"/><path d="M1700 1030 H1752" stroke="#20a020" stroke-width="1.5"/><rect x="1688" y="1068" width="24" height="24" fill="none" stroke="#cfcfcf" stroke-width="1.3"/><rect x="1692" y="1072" width="16" height="16" fill="#aaa"/><rect x="2003" y="1319" width="27" height="130" fill="#6b4634"/><rect x="2031" y="1329" width="101" height="110" fill="#716d68"/><rect x="2045" y="1338" width="55" height="95" fill="#5f534b"/><rect x="2100" y="1330" width="32" height="108" fill="#6a5a50"/><path d="M2030 1338 V1435" stroke="#e6d83a" stroke-width="2"/><rect x="2051" y="1355" width="21" height="12" fill="none" stroke="#e6d83a" stroke-width="2.5"/><circle cx="2064" cy="1390" r="11" fill="#e0d030"/><rect x="2085" y="1413" width="16" height="16" fill="none" stroke="#e6d83a" stroke-width="2"/><path d="M2055 1390 L2100 1345 M2060 1400 L2090 1430" stroke="#8ac0e0" stroke-width="1.5"/><rect x="2036" y="1438" width="27" height="4" fill="#5a6ad0"/><path d="M1696.7 1083.75 L2031.7 1371.75" stroke="#d8ecc8" stroke-width="1.3"/><path d="M1700.0 1080.0 L2035.0 1368.0" stroke="#d8ecc8" stroke-width="1.3"/><path d="M1703.3 1076.25 L2038.3 1364.25" stroke="#d8ecc8" stroke-width="1.3"/><circle cx="2263" cy="960" r="45" fill="none" stroke="#7a7a7a" stroke-width="10"/><rect x="2239" y="936" width="48" height="48" fill="#717171"/><text x="2254" y="964" font-family="Liberation Sans" font-size="9" fill="#555">TOP</text><text x="2256" y="915" font-family="Liberation Sans" font-weight="bold" font-size="15" fill="#bdbdbd">N</text><text x="2256" y="1019" font-family="Liberation Sans" font-weight="bold" font-size="15" fill="#bdbdbd">S</text><text x="2202" y="966" font-family="Liberation Sans" font-weight="bold" font-size="15" fill="#bdbdbd">W</text><text x="2307" y="966" font-family="Liberation Sans" font-weight="bold" font-size="15" fill="#bdbdbd">E</text><path d="M1253 1561 V1521" stroke="#7fbf7f" stroke-width="2"/><path d="M1253 1561 H1303" stroke="#aa2a2a" stroke-width="3"/><text x="1249" y="1518" font-family="Liberation Sans" font-size="12" fill="#4fae4f">y</text><text x="1303" y="1565" font-family="Liberation Sans" font-size="12" fill="#b03030">x</text></g></svg>
<div class="lbl" style="left:76px;top:195px;font-size:17.5px">[+ ] [Left ] [User Defined ] [Default Shading ]</div>
<div class="lbl" style="left:1220px;top:195px;font-size:17.5px">[+ ] [Front ] [Standard ] [Edged Faces ]</div>
<div class="lbl" style="left:76px;top:887px;font-size:17.5px">[+ ] [Orthographic ] [User Defined ] [Wireframe ]</div>
<div class="lbl" style="left:1221px;top:887px;font-size:17.5px">[+ ] [Top ] [Standard ] [Default Shading ]</div>

<div class="a" style="left:2358px;top:190px;width:302px;height:1406px;background:#434343"></div>
<div class="a" style="left:2659px;top:236px;width:9px;height:1360px;background:#3b3b3b"></div>
<div class="a" style="left:2668px;top:236px;width:298px;height:1360px;background:#424242"></div>
<div class="a" style="left:2965px;top:236px;width:15px;height:1360px;background:#3c3c3c"></div>
<div class="a" style="left:2653px;top:234px;width:327px;height:2px;background:#383838"></div>
<div class="a" style="left:2359px;top:184px;width:618px;height:5px;border-top:1.5px dotted #9a9a9a;border-bottom:1.5px dotted #9a9a9a"></div>
<div class="a" style="left:2355px;top:195px;width:298px;height:39px;background:#3a3a3a"></div>
<svg style="left:0;top:0" width="2983" height="1762"><path d="M2369 216.5 H2394 M2381.5 204 V229" stroke="#c4c4c4" stroke-width="3"/><rect x="2420" y="205" width="22" height="20" fill="none" stroke="#3fa7a0" stroke-width="2"/><rect x="2417" y="202" width="6" height="6" fill="#2d4a48" stroke="#3fa7a0" stroke-width="1.5"/><rect x="2439" y="202" width="6" height="6" fill="#2d4a48" stroke="#3fa7a0" stroke-width="1.5"/><rect x="2417" y="222" width="6" height="6" fill="#2d4a48" stroke="#3fa7a0" stroke-width="1.5"/><rect x="2439" y="222" width="6" height="6" fill="#2d4a48" stroke="#3fa7a0" stroke-width="1.5"/><path d="M2425 222 Q2428 210 2438 208" fill="none" stroke="#d8d8d8" stroke-width="2.5"/><rect x="2471" y="204" width="20" height="8" fill="#c4c4c4"/><path d="M2481 212 V217 M2473 226 V217 H2489 V226" fill="none" stroke="#3fa7a0" stroke-width="1.5"/><circle cx="2473" cy="226" r="3.5" fill="#3a7a76"/><circle cx="2489" cy="226" r="3.5" fill="#3a7a76"/><circle cx="2535" cy="216" r="10" fill="#c4c4c4"/><path d="M2522 208 Q2518 216 2522 224 M2518 210 Q2514 216 2518 222" fill="none" stroke="#3a7a76" stroke-width="1.5"/><rect x="2568" y="205" width="25" height="15" fill="#c4c4c4"/><path d="M2574 227 Q2580 222 2587 227 Z" fill="#c4c4c4"/><path d="M2580 220 V224" stroke="#c4c4c4" stroke-width="2"/><path d="M2621 209 L2641 227" stroke="#c4c4c4" stroke-width="3.5"/><circle cx="2620" cy="208" r="4" fill="none" stroke="#c4c4c4" stroke-width="2.5"/><path d="M2376 565 L2384 557" stroke="#d8d8d8" stroke-width="2"/><path d="M2381 552 L2388 545 L2394 551 L2387 558 Z" fill="#e0e0e0"/><path d="M2380 551 L2389 560" stroke="#e0e0e0" stroke-width="3"/><rect x="2411" y="544" width="3" height="24" fill="#1a1a1a"/><rect x="2466" y="544" width="3" height="24" fill="#1a1a1a"/><rect x="2560" y="544" width="3" height="24" fill="#1a1a1a"/><rect x="2435" y="546" width="9" height="21" rx="1" fill="none" stroke="#dcdcdc" stroke-width="2"/><rect x="2437" y="556" width="5" height="10" fill="#5cc8bc"/><circle cx="2490" cy="551" r="5" fill="#6a6a6a"/><circle cx="2497" cy="558" r="6" fill="none" stroke="#2a2a2a" stroke-width="2.5"/><circle cx="2497" cy="564" r="5" fill="none" stroke="#2a2a2a" stroke-width="2.5"/><path d="M2524 550 H2540 M2529 550 V547 H2535 V550 M2526 552 L2527 567 H2537 L2538 552 M2530 555 V564 M2534 555 V564" fill="none" stroke="#2a2a2a" stroke-width="1.8"/><rect x="2578" y="546" width="20" height="22" fill="#d8d8d8"/><rect x="2581" y="553" width="4" height="4" fill="#333"/><rect x="2589" y="553" width="4" height="4" fill="#333"/><rect x="2581" y="561" width="4" height="4" fill="#333"/><rect x="2589" y="561" width="4" height="4" fill="#333"/><path d="M2588 560 L2600 545" stroke="#e0b030" stroke-width="3"/><path d="M2372 602 H2500 M2530 602 H2657" stroke="#5c5c5c" stroke-width="1.5"/><path d="M2505 600 H2527 M2505 603.5 H2527" stroke="#bbb" stroke-width="1.5" stroke-dasharray="1.5 1.5"/></svg>
<div class="a" style="left:2366px;top:249px;width:265px;height:28px;background:#5a5a5a"></div>
<div class="t" style="left:2373px;top:255px;font-size:17px;color:#e0e0e0;letter-spacing:-0.2px">AI54_009_Sun</div>
<div class="a" style="left:2640px;top:248px;width:26px;height:30px;background:#c9c9c9;border:2px solid #1c1c1c"></div>
<div class="a" style="left:2366px;top:294px;width:300px;height:30px;background:#5a5a5a"></div>
<div class="t" style="left:2370px;top:301px;font-size:17px;color:#e0e0e0;letter-spacing:-0.2px">Modifier List</div>
<svg style="left:2647px;top:306px" width="10" height="8"><path d="M0 0 L10 0 L5 7 Z" fill="#e0e0e0"/></svg>
<div class="a" style="left:2365px;top:332px;width:304px;height:198px;background:#464646;border:2px solid #ececec"></div>
<div class="a" style="left:2367px;top:334px;width:300px;height:27px;background:#5b8bd0"></div>
<div class="t" style="left:2401px;top:339px;font-size:17px;color:#e8f0ff;letter-spacing:-0.2px">VRaySun</div>
<div class="a" style="left:2364px;top:614px;width:290px;height:730px;background:#515151;border-top:1px solid #5a5a5a"></div>
<svg style="left:2373px;top:624px" width="11" height="9"><path d="M0 0 L11 0 L5.5 8 Z" fill="#d0d0d0"/></svg>
<div class="t" style="left:2394px;top:621px;font-size:17px;font-weight:bold;color:#eeeeee;letter-spacing:-0.1px">VRaySun Parameters</div>
<div class="a" style="left:2633px;top:624px;width:11px;height:9px;background-image:radial-gradient(#999 40%,transparent 45%);background-size:3px 3px"></div>
<div class="t" style="left:2392px;top:659px;font-size:16.5px;color:#e6e6e6;letter-spacing:-0.35px;width:207px;overflow:hidden">enabled<span style="letter-spacing:1.2px">............................................................</span></div>
<div class="a" style="left:2603px;top:660px;width:16px;height:16px;background:#5c5c5c;border-radius:2px"></div>
<svg style="left:2605px;top:662px" width="12" height="12"><path d="M1 6 L5 10 L11 1" fill="none" stroke="#f0f0f0" stroke-width="2.5"/></svg>
<div class="t" style="left:2392px;top:690px;font-size:16.5px;color:#e6e6e6;letter-spacing:-0.35px;width:207px;overflow:hidden">invisible<span style="letter-spacing:1.2px">............................................................</span></div>
<div class="a" style="left:2603px;top:691px;width:16px;height:16px;background:#5c5c5c;border-radius:2px"></div>
<div class="t" style="left:2392px;top:720px;font-size:16.5px;color:#e6e6e6;letter-spacing:-0.35px;width:207px;overflow:hidden">affect diffuse<span style="letter-spacing:1.2px">............................................................</span></div>
<div class="a" style="left:2603px;top:721px;width:16px;height:16px;background:#5c5c5c;border-radius:2px"></div>
<svg style="left:2605px;top:723px" width="12" height="12"><path d="M1 6 L5 10 L11 1" fill="none" stroke="#f0f0f0" stroke-width="2.5"/></svg>
<div class="t" style="left:2392px;top:751px;font-size:16.5px;color:#e6e6e6;letter-spacing:-0.35px;width:152px;overflow:hidden">diffuse contribution</div>
<div class="a" style="left:2544px;top:750px;width:79px;height:21px;background:#5e5e5e;border-radius:2px"></div>
<div class="t" style="left:2549px;top:753px;font-size:16px;color:#dedede;letter-spacing:-0.3px">1,0</div>
<svg style="left:2610px;top:753px" width="9" height="14"><path d="M0.5 5 L4.5 0 L8.5 5 Z M0.5 9 L8.5 9 L4.5 14 Z" fill="#d8d8d8"/></svg>
<div class="t" style="left:2392px;top:780px;font-size:16.5px;color:#e6e6e6;letter-spacing:-0.35px;width:207px;overflow:hidden">affect specular<span style="letter-spacing:1.2px">............................................................</span></div>
<div class="a" style="left:2603px;top:781px;width:16px;height:16px;background:#5c5c5c;border-radius:2px"></div>
<svg style="left:2605px;top:783px" width="12" height="12"><path d="M1 6 L5 10 L11 1" fill="none" stroke="#f0f0f0" stroke-width="2.5"/></svg>
<div class="t" style="left:2392px;top:812px;font-size:16.5px;color:#e6e6e6;letter-spacing:-0.35px;width:152px;overflow:hidden">specular contributio</div>
<div class="a" style="left:2544px;top:811px;width:79px;height:21px;background:#5e5e5e;border-radius:2px"></div>
<div class="t" style="left:2549px;top:814px;font-size:16px;color:#dedede;letter-spacing:-0.3px">1,0</div>
<svg style="left:2610px;top:814px" width="9" height="14"><path d="M0.5 5 L4.5 0 L8.5 5 Z M0.5 9 L8.5 9 L4.5 14 Z" fill="#d8d8d8"/></svg>
<div class="t" style="left:2392px;top:841px;font-size:16.5px;color:#e6e6e6;letter-spacing:-0.35px;width:215px;overflow:hidden">cast atmospheric shadows..</div>
<div class="a" style="left:2603px;top:842px;width:16px;height:16px;background:#5c5c5c;border-radius:2px"></div>
<svg style="left:2605px;top:844px" width="12" height="12"><path d="M1 6 L5 10 L11 1" fill="none" stroke="#f0f0f0" stroke-width="2.5"/></svg>
<div class="t" style="left:2392px;top:872px;font-size:16.5px;color:#e6e6e6;letter-spacing:-0.35px;width:144px;overflow:hidden">turbidity<span style="letter-spacing:1.2px">............................................................</span></div>
<div class="a" style="left:2544px;top:871px;width:79px;height:21px;background:#5e5e5e;border-radius:2px"></div>
<div class="t" style="left:2549px;top:874px;font-size:16px;color:#dedede;letter-spacing:-0.3px">2,5</div>
<svg style="left:2610px;top:874px" width="9" height="14"><path d="M0.5 5 L4.5 0 L8.5 5 Z M0.5 9 L8.5 9 L4.5 14 Z" fill="#d8d8d8"/></svg>
<div class="t" style="left:2392px;top:902px;font-size:16.5px;color:#e6e6e6;letter-spacing:-0.35px;width:144px;overflow:hidden">ozone<span style="letter-spacing:1.2px">............................................................</span></div>
<div class="a" style="left:2544px;top:901px;width:79px;height:21px;background:#5e5e5e;border-radius:2px"></div>
<div class="t" style="left:2549px;top:904px;font-size:16px;color:#dedede;letter-spacing:-0.3px">0,35</div>
<svg style="left:2610px;top:904px" width="9" height="14"><path d="M0.5 5 L4.5 0 L8.5 5 Z M0.5 9 L8.5 9 L4.5 14 Z" fill="#d8d8d8"/></svg>
<div class="t" style="left:2392px;top:933px;font-size:16.5px;color:#e6e6e6;letter-spacing:-0.35px;width:152px;overflow:hidden">intensity multiplier..</div>
<div class="a" style="left:2544px;top:932px;width:79px;height:21px;background:#5e5e5e;border-radius:2px"></div>
<div class="t" style="left:2549px;top:935px;font-size:16px;color:#dedede;letter-spacing:-0.3px">1,0</div>
<svg style="left:2610px;top:935px" width="9" height="14"><path d="M0.5 5 L4.5 0 L8.5 5 Z M0.5 9 L8.5 9 L4.5 14 Z" fill="#d8d8d8"/></svg>
<div class="t" style="left:2392px;top:962px;font-size:16.5px;color:#e6e6e6;letter-spacing:-0.35px;width:144px;overflow:hidden">size multiplier<span style="letter-spacing:1.2px">............................................................</span></div>
<div class="a" style="left:2544px;top:961px;width:79px;height:21px;background:#5e5e5e;border-radius:2px"></div>
<div class="t" style="left:2549px;top:964px;font-size:16px;color:#dedede;letter-spacing:-0.3px">5,0</div>
<svg style="left:2610px;top:964px" width="9" height="14"><path d="M0.5 5 L4.5 0 L8.5 5 Z M0.5 9 L8.5 9 L4.5 14 Z" fill="#d8d8d8"/></svg>
<div class="t" style="left:2392px;top:993px;font-size:16.5px;color:#e6e6e6;letter-spacing:-0.35px;width:116px;overflow:hidden">filter color<span style="letter-spacing:1.2px">............................................................</span></div>
<div class="a" style="left:2515px;top:991px;width:109px;height:22px;background:#ffffff;border:2px solid #111"></div>
<div class="t" style="left:2392px;top:1023px;font-size:16.5px;color:#e6e6e6;letter-spacing:-0.35px;width:102px;overflow:hidden">color mode<span style="letter-spacing:1.2px">............................................................</span></div>
<div class="a" style="left:2500px;top:1018px;width:126px;height:29px;background:#5c5c5c;border-radius:2px"></div>
<div class="t" style="left:2507px;top:1026px;font-size:16.5px;color:#e0e0e0;letter-spacing:-0.3px">filter</div>
<svg style="left:2607px;top:1031px" width="9" height="7"><path d="M0 0 L9 0 L4.5 6 Z" fill="#e0e0e0"/></svg>
<div class="t" style="left:2392px;top:1055px;font-size:16.5px;color:#e6e6e6;letter-spacing:-0.35px;width:144px;overflow:hidden">shadow subdivs<span style="letter-spacing:1.2px">............................................................</span></div>
<div class="a" style="left:2544px;top:1054px;width:79px;height:21px;background:#5e5e5e;border-radius:2px"></div>
<div class="t" style="left:2549px;top:1057px;font-size:16px;color:#dedede;letter-spacing:-0.3px">8</div>
<svg style="left:2610px;top:1057px" width="9" height="14"><path d="M0.5 5 L4.5 0 L8.5 5 Z M0.5 9 L8.5 9 L4.5 14 Z" fill="#d8d8d8"/></svg>
<div class="t" style="left:2392px;top:1086px;font-size:16.5px;color:#e6e6e6;letter-spacing:-0.35px;width:144px;overflow:hidden">shadow bias<span style="letter-spacing:1.2px">............................................................</span></div>
<div class="a" style="left:2544px;top:1085px;width:79px;height:21px;background:#5e5e5e;border-radius:2px"></div>
<div class="t" style="left:2549px;top:1088px;font-size:16px;color:#dedede;letter-spacing:-0.3px">0,2cm</div>
<svg style="left:2610px;top:1088px" width="9" height="14"><path d="M0.5 5 L4.5 0 L8.5 5 Z M0.5 9 L8.5 9 L4.5 14 Z" fill="#d8d8d8"/></svg>
<div class="t" style="left:2392px;top:1115px;font-size:16.5px;color:#e6e6e6;letter-spacing:-0.35px;width:152px;overflow:hidden">photon emit radius.</div>
<div class="a" style="left:2544px;top:1114px;width:79px;height:21px;background:#5e5e5e;border-radius:2px"></div>
<div class="t" style="left:2549px;top:1117px;font-size:16px;color:#dedede;letter-spacing:-0.3px">50,0cm</div>
<svg style="left:2610px;top:1117px" width="9" height="14"><path d="M0.5 5 L4.5 0 L8.5 5 Z M0.5 9 L8.5 9 L4.5 14 Z" fill="#d8d8d8"/></svg>
<div class="t" style="left:2392px;top:1147px;font-size:16.5px;color:#e6e6e6;letter-spacing:-0.35px;width:102px;overflow:hidden">sky model<span style="letter-spacing:1.2px">............................................................</span></div>
<div class="a" style="left:2500px;top:1142px;width:126px;height:29px;background:#5c5c5c;border-radius:2px"></div>
<div class="t" style="left:2507px;top:1150px;font-size:16.5px;color:#e0e0e0;letter-spacing:-0.3px">Hosek et al.</div>
<svg style="left:2607px;top:1155px" width="9" height="7"><path d="M0 0 L9 0 L4.5 6 Z" fill="#e0e0e0"/></svg>
<div class="t" style="left:2392px;top:1178px;font-size:16.5px;color:#e6e6e6;letter-spacing:-0.35px;width:152px;overflow:hidden">indirect horiz illum..</div>
<div class="a" style="left:2544px;top:1177px;width:79px;height:21px;background:#565656;border-radius:2px"></div>
<div class="t" style="left:2549px;top:1180px;font-size:16px;color:#8a8a8a;letter-spacing:-0.3px">25000,(</div>
<svg style="left:2610px;top:1180px" width="9" height="14"><path d="M0.5 5 L4.5 0 L8.5 5 Z M0.5 9 L8.5 9 L4.5 14 Z" fill="#d8d8d8"/></svg>
<div class="t" style="left:2392px;top:1209px;font-size:16.5px;color:#e6e6e6;letter-spacing:-0.35px;width:124px;overflow:hidden">ground albedo..</div>
<div class="a" style="left:2515px;top:1207px;width:109px;height:22px;background:#787878;border:2px solid #111"></div>
<div class="t" style="left:2392px;top:1240px;font-size:16.5px;color:#e6e6e6;letter-spacing:-0.35px;width:144px;overflow:hidden">blend angle<span style="letter-spacing:1.2px">............................................................</span></div>
<div class="a" style="left:2544px;top:1239px;width:79px;height:21px;background:#5e5e5e;border-radius:2px"></div>
<div class="t" style="left:2549px;top:1242px;font-size:16px;color:#dedede;letter-spacing:-0.3px">5,739</div>
<svg style="left:2610px;top:1242px" width="9" height="14"><path d="M0.5 5 L4.5 0 L8.5 5 Z M0.5 9 L8.5 9 L4.5 14 Z" fill="#d8d8d8"/></svg>
<div class="t" style="left:2392px;top:1269px;font-size:16.5px;color:#e6e6e6;letter-spacing:-0.35px;width:144px;overflow:hidden">horizon offset<span style="letter-spacing:1.2px">............................................................</span></div>
<div class="a" style="left:2544px;top:1268px;width:79px;height:21px;background:#5e5e5e;border-radius:2px"></div>
<div class="t" style="left:2549px;top:1271px;font-size:16px;color:#dedede;letter-spacing:-0.3px">0,0</div>
<svg style="left:2610px;top:1271px" width="9" height="14"><path d="M0.5 5 L4.5 0 L8.5 5 Z M0.5 9 L8.5 9 L4.5 14 Z" fill="#d8d8d8"/></svg>
<div class="a" style="left:2395px;top:1300px;width:228px;height:21px;background:#5c5c5c;border-radius:3px"></div>
<div class="t" style="left:2476px;top:1302px;font-size:16.5px;color:#e0e0e0;letter-spacing:-0.3px">Exclude...</div>

<div class="a" style="left:0;top:1602px;width:2983px;height:1px;background:#3a3a3a"></div>
<div class="a" style="left:2px;top:1612px;width:4px;height:72px;border-left:2px dotted #8a8a8a"></div>
<div class="a" style="left:14px;top:1611px;width:22px;height:26px;background:#565656;border-radius:3px"></div>
<div class="a" style="left:39px;top:1611px;width:191px;height:26px;background:#5a5a5a;border-radius:3px"></div>
<div class="a" style="left:233px;top:1611px;width:22px;height:26px;background:#565656;border-radius:3px"></div>
<div class="t" style="left:19px;top:1615px;font-size:18px;color:#cfcfcf">&lt;</div>
<div class="t" style="left:238px;top:1615px;font-size:18px;color:#cfcfcf">&gt;</div>
<div class="t" style="left:105px;top:1615px;font-size:17px;color:#d8d8d8;letter-spacing:-0.3px">0 / 100</div>
<div class="a" style="left:13px;top:1644px;width:2890px;height:2px;background:#1c1c1c"></div>
<div class="a" style="left:13px;top:1646px;width:78px;height:38px;background:#3d3d3d"></div>
<div class="a" style="left:91px;top:1646px;width:2812px;height:37px;background:#2d2d2d"></div>
<svg style="left:0;top:0" width="2983" height="1762"><path d="M35 1657 H41 M35 1661 H41 M35 1665 H41 M35 1669 H41 M35 1673 H41" stroke="#d0d0d0" stroke-width="2"/><path d="M44 1668 Q47 1654 51 1664 Q54 1674 57 1660" fill="none" stroke="#3fa7a0" stroke-width="2"/><path d="M102.0 1646 V1664" stroke="#7a7a7a" stroke-width="1.5"/><path d="M129.9 1646 V1664" stroke="#7a7a7a" stroke-width="1.5"/><path d="M157.8 1646 V1664" stroke="#7a7a7a" stroke-width="1.5"/><path d="M185.8 1646 V1664" stroke="#7a7a7a" stroke-width="1.5"/><path d="M213.7 1646 V1664" stroke="#7a7a7a" stroke-width="1.5"/><path d="M241.6 1646 V1666 M241.6 1683 V1686" stroke="#8a8a8a" stroke-width="1.5"/><path d="M269.5 1646 V1664" stroke="#7a7a7a" stroke-width="1.5"/><path d="M297.4 1646 V1664" stroke="#7a7a7a" stroke-width="1.5"/><path d="M325.4 1646 V1664" stroke="#7a7a7a" stroke-width="1.5"/><path d="M353.3 1646 V1664" stroke="#7a7a7a" stroke-width="1.5"/><path d="M381.2 1646 V1666 M381.2 1683 V1686" stroke="#8a8a8a" stroke-width="1.5"/><path d="M409.1 1646 V1664" stroke="#7a7a7a" stroke-width="1.5"/><path d="M437.0 1646 V1664" stroke="#7a7a7a" stroke-width="1.5"/><path d="M465.0 1646 V1664" stroke="#7a7a7a" stroke-width="1.5"/><path d="M492.9 1646 V1664" stroke="#7a7a7a" stroke-width="1.5"/><path d="M520.8 1646 V1666 M520.8 1683 V1686" stroke="#8a8a8a" stroke-width="1.5"/><path d="M548.7 1646 V1664" stroke="#7a7a7a" stroke-width="1.5"/><path d="M576.6 1646 V1664" stroke="#7a7a7a" stroke-width="1.5"/><path d="M604.6 1646 V1664" stroke="#7a7a7a" stroke-width="1.5"/><path d="M632.5 1646 V1664" stroke="#7a7a7a" stroke-width="1.5"/><path d="M660.4 1646 V1666 M660.4 1683 V1686" stroke="#8a8a8a" stroke-width="1.5"/><path d="M688.3 1646 V1664" stroke="#7a7a7a" stroke-width="1.5"/><path d="M716.2 1646 V1664" stroke="#7a7a7a" stroke-width="1.5"/><path d="M744.2 1646 V1664" stroke="#7a7a7a" stroke-width="1.5"/><path d="M772.1 1646 V1664" stroke="#7a7a7a" stroke-width="1.5"/><path d="M800.0 1646 V1666 M800.0 1683 V1686" stroke="#8a8a8a" stroke-width="1.5"/><path d="M827.9 1646 V1664" stroke="#7a7a7a" stroke-width="1.5"/><path d="M855.8 1646 V1664" stroke="#7a7a7a" stroke-width="1.5"/><path d="M883.8 1646 V1664" stroke="#7a7a7a" stroke-width="1.5"/><path d="M911.7 1646 V1664" stroke="#7a7a7a" stroke-width="1.5"/><path d="M939.6 1646 V1666 M939.6 1683 V1686" stroke="#8a8a8a" stroke-width="1.5"/><path d="M967.5 1646 V1664" stroke="#7a7a7a" stroke-width="1.5"/><path d="M995.4 1646 V1664" stroke="#7a7a7a" stroke-width="1.5"/><path d="M1023.4 1646 V1664" stroke="#7a7a7a" stroke-width="1.5"/><path d="M1051.3 1646 V1664" stroke="#7a7a7a" stroke-width="1.5"/><path d="M1079.2 1646 V1666 M1079.2 1683 V1686" stroke="#8a8a8a" stroke-width="1.5"/><path d="M1107.1 1646 V1664" stroke="#7a7a7a" stroke-width="1.5"/><path d="M1135.0 1646 V1664" stroke="#7a7a7a" stroke-width="1.5"/><path d="M1163.0 1646 V1664" stroke="#7a7a7a" stroke-width="1.5"/><path d="M1190.9 1646 V1664" stroke="#7a7a7a" stroke-width="1.5"/><path d="M1218.8 1646 V1666 M1218.8 1683 V1686" stroke="#8a8a8a" stroke-width="1.5"/><path d="M1246.7 1646 V1664" stroke="#7a7a7a" stroke-width="1.5"/><path d="M1274.6 1646 V1664" stroke="#7a7a7a" stroke-width="1.5"/><path d="M1302.6 1646 V1664" stroke="#7a7a7a" stroke-width="1.5"/><path d="M1330.5 1646 V1664" stroke="#7a7a7a" stroke-width="1.5"/><path d="M1358.4 1646 V1666 M1358.4 1683 V1686" stroke="#8a8a8a" stroke-width="1.5"/><path d="M1386.3 1646 V1664" stroke="#7a7a7a" stroke-width="1.5"/><path d="M1414.2 1646 V1664" stroke="#7a7a7a" stroke-width="1.5"/><path d="M1442.2 1646 V1664" stroke="#7a7a7a" stroke-width="1.5"/><path d="M1470.1 1646 V1664" stroke="#7a7a7a" stroke-width="1.5"/><path d="M1498.0 1646 V1666 M1498.0 1683 V1686" stroke="#8a8a8a" stroke-width="1.5"/><path d="M1525.9 1646 V1664" stroke="#7a7a7a" stroke-width="1.5"/><path d="M1553.8 1646 V1664" stroke="#7a7a7a" stroke-width="1.5"/><path d="M1581.8 1646 V1664" stroke="#7a7a7a" stroke-width="1.5"/><path d="M1609.7 1646 V1664" stroke="#7a7a7a" stroke-width="1.5"/><path d="M1637.6 1646 V1666 M1637.6 1683 V1686" stroke="#8a8a8a" stroke-width="1.5"/><path d="M1665.5 1646 V1664" stroke="#7a7a7a" stroke-width="1.5"/><path d="M1693.4 1646 V1664" stroke="#7a7a7a" stroke-width="1.5"/><path d="M1721.4 1646 V1664" stroke="#7a7a7a" stroke-width="1.5"/><path d="M1749.3 1646 V1664" stroke="#7a7a7a" stroke-width="1.5"/><path d="M1777.2 1646 V1666 M1777.2 1683 V1686" stroke="#8a8a8a" stroke-width="1.5"/><path d="M1805.1 1646 V1664" stroke="#7a7a7a" stroke-width="1.5"/><path d="M1833.0 1646 V1664" stroke="#7a7a7a" stroke-width="1.5"/><path d="M1861.0 1646 V1664" stroke="#7a7a7a" stroke-width="1.5"/><path d="M1888.9 1646 V1664" stroke="#7a7a7a" stroke-width="1.5"/><path d="M1916.8 1646 V1666 M1916.8 1683 V1686" stroke="#8a8a8a" stroke-width="1.5"/><path d="M1944.7 1646 V1664" stroke="#7a7a7a" stroke-width="1.5"/><path d="M1972.6 1646 V1664" stroke="#7a7a7a" stroke-width="1.5"/><path d="M2000.6 1646 V1664" stroke="#7a7a7a" stroke-width="1.5"/><path d="M2028.5 1646 V1664" stroke="#7a7a7a" stroke-width="1.5"/><path d="M2056.4 1646 V1666 M2056.4 1683 V1686" stroke="#8a8a8a" stroke-width="1.5"/><path d="M2084.3 1646 V1664" stroke="#7a7a7a" stroke-width="1.5"/><path d="M2112.2 1646 V1664" stroke="#7a7a7a" stroke-width="1.5"/><path d="M2140.2 1646 V1664" stroke="#7a7a7a" stroke-width="1.5"/><path d="M2168.1 1646 V1664" stroke="#7a7a7a" stroke-width="1.5"/><path d="M2196.0 1646 V1666 M2196.0 1683 V1686" stroke="#8a8a8a" stroke-width="1.5"/><path d="M2223.9 1646 V1664" stroke="#7a7a7a" stroke-width="1.5"/><path d="M2251.8 1646 V1664" stroke="#7a7a7a" stroke-width="1.5"/><path d="M2279.8 1646 V1664" stroke="#7a7a7a" stroke-width="1.5"/><path d="M2307.7 1646 V1664" stroke="#7a7a7a" stroke-width="1.5"/><path d="M2335.6 1646 V1666 M2335.6 1683 V1686" stroke="#8a8a8a" stroke-width="1.5"/><path d="M2363.5 1646 V1664" stroke="#7a7a7a" stroke-width="1.5"/><path d="M2391.4 1646 V1664" stroke="#7a7a7a" stroke-width="1.5"/><path d="M2419.4 1646 V1664" stroke="#7a7a7a" stroke-width="1.5"/><path d="M2447.3 1646 V1664" stroke="#7a7a7a" stroke-width="1.5"/><path d="M2475.2 1646 V1666 M2475.2 1683 V1686" stroke="#8a8a8a" stroke-width="1.5"/><path d="M2503.1 1646 V1664" stroke="#7a7a7a" stroke-width="1.5"/><path d="M2531.0 1646 V1664" stroke="#7a7a7a" stroke-width="1.5"/><path d="M2559.0 1646 V1664" stroke="#7a7a7a" stroke-width="1.5"/><path d="M2586.9 1646 V1664" stroke="#7a7a7a" stroke-width="1.5"/><path d="M2614.8 1646 V1666 M2614.8 1683 V1686" stroke="#8a8a8a" stroke-width="1.5"/><path d="M2642.7 1646 V1664" stroke="#7a7a7a" stroke-width="1.5"/><path d="M2670.6 1646 V1664" stroke="#7a7a7a" stroke-width="1.5"/><path d="M2698.6 1646 V1664" stroke="#7a7a7a" stroke-width="1.5"/><path d="M2726.5 1646 V1664" stroke="#7a7a7a" stroke-width="1.5"/><path d="M2754.4 1646 V1666 M2754.4 1683 V1686" stroke="#8a8a8a" stroke-width="1.5"/><path d="M2782.3 1646 V1664" stroke="#7a7a7a" stroke-width="1.5"/><path d="M2810.2 1646 V1664" stroke="#7a7a7a" stroke-width="1.5"/><path d="M2838.2 1646 V1664" stroke="#7a7a7a" stroke-width="1.5"/><path d="M2866.1 1646 V1664" stroke="#7a7a7a" stroke-width="1.5"/><path d="M2894.0 1646 V1666 M2894.0 1683 V1686" stroke="#8a8a8a" stroke-width="1.5"/></svg>
<div class="t" style="left:237.0px;top:1666px;font-size:16.5px;color:#d0d0d0;letter-spacing:-0.5px">5</div>
<div class="t" style="left:372.0px;top:1666px;font-size:16.5px;color:#d0d0d0;letter-spacing:-0.5px">10</div>
<div class="t" style="left:511.6px;top:1666px;font-size:16.5px;color:#d0d0d0;letter-spacing:-0.5px">15</div>
<div class="t" style="left:651.2px;top:1666px;font-size:16.5px;color:#d0d0d0;letter-spacing:-0.5px">20</div>
<div class="t" style="left:790.8px;top:1666px;font-size:16.5px;color:#d0d0d0;letter-spacing:-0.5px">25</div>
<div class="t" style="left:930.4px;top:1666px;font-size:16.5px;color:#d0d0d0;letter-spacing:-0.5px">30</div>
<div class="t" style="left:1070.0px;top:1666px;font-size:16.5px;color:#d0d0d0;letter-spacing:-0.5px">35</div>
<div class="t" style="left:1209.6px;top:1666px;font-size:16.5px;color:#d0d0d0;letter-spacing:-0.5px">40</div>
<div class="t" style="left:1349.2px;top:1666px;font-size:16.5px;color:#d0d0d0;letter-spacing:-0.5px">45</div>
<div class="t" style="left:1488.8px;top:1666px;font-size:16.5px;color:#d0d0d0;letter-spacing:-0.5px">50</div>
<div class="t" style="left:1628.4px;top:1666px;font-size:16.5px;color:#d0d0d0;letter-spacing:-0.5px">55</div>
<div class="t" style="left:1768.0px;top:1666px;font-size:16.5px;color:#d0d0d0;letter-spacing:-0.5px">60</div>
<div class="t" style="left:1907.6px;top:1666px;font-size:16.5px;color:#d0d0d0;letter-spacing:-0.5px">65</div>
<div class="t" style="left:2047.2px;top:1666px;font-size:16.5px;color:#d0d0d0;letter-spacing:-0.5px">70</div>
<div class="t" style="left:2186.8px;top:1666px;font-size:16.5px;color:#d0d0d0;letter-spacing:-0.5px">75</div>
<div class="t" style="left:2326.4px;top:1666px;font-size:16.5px;color:#d0d0d0;letter-spacing:-0.5px">80</div>
<div class="t" style="left:2466.0px;top:1666px;font-size:16.5px;color:#d0d0d0;letter-spacing:-0.5px">85</div>
<div class="t" style="left:2605.6px;top:1666px;font-size:16.5px;color:#d0d0d0;letter-spacing:-0.5px">90</div>
<div class="t" style="left:2745.2px;top:1666px;font-size:16.5px;color:#d0d0d0;letter-spacing:-0.5px">95</div>
<div class="t" style="left:2880.2px;top:1666px;font-size:16.5px;color:#d0d0d0;letter-spacing:-0.5px">100</div>
<div class="a" style="left:97px;top:1647px;width:11px;height:37px;background:#aca43a;border:1px solid #2a2a10"></div>
<div class="t" style="left:98px;top:1667px;font-size:14px;color:#e8e070">0</div>
<div class="a" style="left:5px;top:1692px;width:152px;height:37px;background:#e6d2d2;border:2px solid #f4f4f4"></div>
<div class="a" style="left:5px;top:1729px;width:152px;height:33px;background:#fdfdfd"></div>
<div class="t" style="left:13px;top:1737px;font-family:'Liberation Mono',monospace;font-size:17px;color:#9a9a9a;width:140px;overflow:hidden">MAXScript Mi</div>
<div class="a" style="left:164px;top:1690px;width:3px;height:72px;background:#1e1e1e"></div>
<div class="t" style="left:173px;top:1704px;font-size:17px;color:#e0e0e0;letter-spacing:-0.4px">1 Light Selected</div>
<div class="t" style="left:173px;top:1742px;font-size:17px;color:#e0e0e0;letter-spacing:-0.15px">Click and drag to select and move objects</div>
<svg style="left:0;top:0" width="2983" height="1762"><path d="M1591 1706 V1701 H1596 M1607 1701 H1612 V1706 M1612 1716 V1722 H1607 M1596 1722 H1591 V1716" fill="none" stroke="#e0e0e0" stroke-width="2"/><rect x="1597" y="1706" width="10" height="10" fill="#4fc3c0"/><path d="M1639 1709 V1704 A5 5 0 0 1 1649 1704 V1709" fill="none" stroke="#e0e0e0" stroke-width="2.5"/><rect x="1636" y="1708" width="16" height="14" fill="#e0e0e0"/><rect x="1642.5" y="1712" width="3" height="6" fill="#333"/><rect x="1675" y="1701" width="21" height="21" fill="none" stroke="#e0e0e0" stroke-width="2"/><circle cx="1685.5" cy="1711.5" r="4" fill="none" stroke="#e0e0e0" stroke-width="2"/><path d="M1675 1701 L1682 1708 M1696 1701 L1689 1708 M1675 1722 L1682 1715 M1696 1722 L1689 1715" stroke="#e0e0e0" stroke-width="2"/><rect x="2280" y="1703" width="3" height="16" fill="#e0e0e0"/><path d="M2292 1703 L2284 1711 L2292 1719 Z M2301 1703 L2293 1711 L2301 1719 Z" fill="#e0e0e0"/><rect x="2312" y="1700" width="3" height="22" fill="#1a1a1a"/><rect x="2423" y="1700" width="3" height="22" fill="#1a1a1a"/><path d="M2330 1703 L2322 1711 L2330 1719 Z" fill="#e0e0e0"/><rect x="2333" y="1703" width="3" height="16" fill="#e0e0e0"/><rect x="2339" y="1703" width="3" height="16" fill="#e0e0e0"/><path d="M2358 1700 L2376 1711 L2358 1722 Z" fill="#e0e0e0"/><path d="M2377 1724 L2382 1719 L2382 1724 Z" fill="#e0e0e0"/><rect x="2392" y="1703" width="3" height="16" fill="#e0e0e0"/><rect x="2398" y="1703" width="3" height="16" fill="#e0e0e0"/><path d="M2403 1703 L2411 1711 L2403 1719 Z" fill="#e0e0e0"/><path d="M2433 1703 L2441 1711 L2433 1719 Z M2442 1703 L2450 1711 L2442 1719 Z" fill="#e0e0e0"/><rect x="2452" y="1703" width="3" height="16" fill="#e0e0e0"/><path d="M2290 1740 L2282 1746 L2290 1752 Z M2294 1740 L2302 1746 L2294 1752 Z" fill="#e0e0e0"/><rect x="2312" y="1734" width="3" height="24" fill="#1a1a1a"/><rect x="2423" y="1734" width="3" height="24" fill="#1a1a1a"/><circle cx="2441" cy="1743" r="6" fill="#e0e0e0"/><path d="M2441 1739 V1743 H2444" stroke="#333" stroke-width="1.5" fill="none"/><circle cx="2450" cy="1752" r="6" fill="#e0b030"/><circle cx="2450" cy="1752" r="2.5" fill="#6a5010"/><rect x="2479" y="1696" width="66" height="64" rx="3" fill="#555"/><path d="M2502 1708 V1741 M2486 1725 H2519" stroke="#ececec" stroke-width="7"/><path d="M2515 1743 L2530 1728" stroke="#3fb0a8" stroke-width="3.5"/><circle cx="2513" cy="1746" r="5" fill="none" stroke="#3fb0a8" stroke-width="3"/><path d="M2640 1755 Q2642 1740 2648 1736 M2656 1755 Q2654 1740 2648 1736" fill="none" stroke="#3fa7a0" stroke-width="2"/><rect x="2645" y="1730" width="6" height="6" fill="none" stroke="#ddd" stroke-width="1.5"/><path d="M2655 1762 L2660 1757 L2660 1762 Z" fill="#ddd"/><circle cx="2842" cy="1707" r="7" fill="none" stroke="#e0e0e0" stroke-width="2.5"/><path d="M2837 1712 L2830 1719" stroke="#e0e0e0" stroke-width="3"/><circle cx="2873" cy="1712" r="5" fill="none" stroke="#e0e0e0" stroke-width="2"/><path d="M2869 1716 L2864 1721" stroke="#e0e0e0" stroke-width="2.5"/><rect x="2876" y="1700" width="6" height="6" fill="#3fa7a0"/><rect x="2883" y="1700" width="6" height="6" fill="#3fa7a0"/><rect x="2883" y="1707" width="6" height="6" fill="#3fa7a0"/><path d="M2900 1705 V1700 H2905 M2916 1700 H2921 V1705 M2921 1717 V1722 H2916 M2905 1722 H2900 V1717" fill="none" stroke="#e0e0e0" stroke-width="2"/><path d="M2904 1708 L2910.5 1704 L2917 1708 V1715 L2910.5 1719 L2904 1715 Z" fill="#3fb8b0"/><path d="M2940 1712 L2946 1706 L2952 1712 L2946 1718 Z" fill="#e0e0e0"/><rect x="2948" y="1700" width="8" height="12" rx="2" fill="#3fb8b0"/><path d="M2958 1724 L2963 1719 L2963 1724 Z" fill="#ddd"/><path d="M2830 1737 V1733 H2834 M2846 1733 H2850 V1737 M2850 1750 V1754 H2846 M2834 1754 H2830 V1750" fill="none" stroke="#3fa7a0" stroke-width="2"/><circle cx="2840" cy="1743" r="5" fill="none" stroke="#e0e0e0" stroke-width="2"/><path d="M2836 1747 L2830 1753" stroke="#3fa7a0" stroke-width="2.5"/><path d="M2868 1760 Q2866 1745 2870 1740 V1732 M2873 1740 V1730 M2877 1740 V1731 M2881 1741 V1734 M2868 1760 H2882 Q2886 1750 2884 1742" fill="none" stroke="#e0e0e0" stroke-width="3"/><path d="M2885 1762 L2890 1757 L2890 1762 Z" fill="#ddd"/><ellipse cx="2911" cy="1748" rx="13" ry="6" fill="none" stroke="#e0e0e0" stroke-width="2" transform="rotate(-30 2911 1748)"/><path d="M2906 1735 L2916 1731 L2920 1741 L2910 1745 Z" fill="#3fb8b0"/><path d="M2922 1762 L2927 1757 L2927 1762 Z" fill="#ddd"/><rect x="2942" y="1734" width="20" height="22" fill="#e0e0e0"/><path d="M2944 1754 L2958 1738" stroke="#333" stroke-width="2.5"/><rect x="2942" y="1744" width="10" height="12" fill="#333"/><rect x="2944" y="1746" width="7" height="9" fill="#e0e0e0"/></svg>
<div class="t" style="left:1710px;top:1703px;font-size:17px;color:#e0e0e0">X:</div>
<div class="a" style="left:1731px;top:1699px;width:104px;height:26px;background:#5a5a5a"></div>
<div class="t" style="left:1735px;top:1704px;font-size:17px;color:#d6d6d6;letter-spacing:-0.5px;width:84px;overflow:hidden">-3143,948c</div>
<svg style="left:1823px;top:1704px" width="8" height="14"><path d="M0 5 L4 0 L8 5 Z M0 9 L8 9 L4 14 Z" fill="#d8d8d8"/></svg>
<div class="t" style="left:1841px;top:1703px;font-size:17px;color:#e0e0e0">Y:</div>
<div class="a" style="left:1862px;top:1699px;width:104px;height:26px;background:#5a5a5a"></div>
<div class="t" style="left:1866px;top:1704px;font-size:17px;color:#d6d6d6;letter-spacing:-0.5px;width:84px;overflow:hidden">2333,907c</div>
<svg style="left:1954px;top:1704px" width="8" height="14"><path d="M0 5 L4 0 L8 5 Z M0 9 L8 9 L4 14 Z" fill="#d8d8d8"/></svg>
<div class="t" style="left:1971px;top:1703px;font-size:17px;color:#e0e0e0">Z:</div>
<div class="a" style="left:1993px;top:1699px;width:104px;height:26px;background:#5a5a5a"></div>
<div class="t" style="left:1997px;top:1704px;font-size:17px;color:#d6d6d6;letter-spacing:-0.5px;width:84px;overflow:hidden">1829,967c</div>
<svg style="left:2085px;top:1704px" width="8" height="14"><path d="M0 5 L4 0 L8 5 Z M0 9 L8 9 L4 14 Z" fill="#d8d8d8"/></svg>
<div class="t" style="left:2104px;top:1703px;font-size:17px;color:#e6e6e6;letter-spacing:-0.4px">Grid = 10,0cm</div>
<div class="a" style="left:2064px;top:1736px;width:33px;height:30px;background:#5a87c8;border-radius:4px"></div>
<svg style="left:2070px;top:1740px" width="22" height="22"><path d="M11 2 L20 6 V16 L11 20 L2 16 V6 Z M2 6 L11 10 L20 6 M11 10 V20" fill="none" stroke="#1e2e48" stroke-width="1.8"/></svg>
<div class="t" style="left:2104px;top:1742px;font-size:17px;color:#e6e6e6;letter-spacing:-0.4px">Add Time Tag</div>
<div class="a" style="left:2316px;top:1734px;width:106px;height:24px;background:#5a5a5a"></div>
<div class="t" style="left:2322px;top:1739px;font-size:17px;color:#d8d8d8">0</div>
<svg style="left:2409px;top:1739px" width="8" height="14"><path d="M0 5 L4 0 L8 5 Z M0 9 L8 9 L4 14 Z" fill="#d8d8d8"/></svg>
<div class="a" style="left:2552px;top:1696px;width:71px;height:31px;background:#555;border-radius:3px"></div>
<div class="t" style="left:2553px;top:1704px;font-size:17px;color:#d8d8d8;letter-spacing:-0.6px">Auto Key</div>
<div class="a" style="left:2552px;top:1730px;width:71px;height:30px;background:#555;border-radius:3px"></div>
<div class="t" style="left:2557px;top:1737px;font-size:17px;color:#d8d8d8;letter-spacing:-0.5px">Set Key</div>
<div class="a" style="left:2631px;top:1696px;width:178px;height:30px;background:#595959;border-radius:2px"></div>
<div class="t" style="left:2638px;top:1703px;font-size:17px;color:#dedede;letter-spacing:-0.3px">Selected</div>
<svg style="left:2789px;top:1708px" width="10" height="8"><path d="M0 0 L10 0 L5 7 Z" fill="#e0e0e0"/></svg>
<div class="a" style="left:2672px;top:1731px;width:137px;height:30px;background:#555;border-radius:3px"></div>
<div class="t" style="left:2691px;top:1739px;font-size:17px;color:#d8d8d8;letter-spacing:-0.4px">Key Filters...</div>

<div class="a" style="left:2981px;top:0;width:2px;height:1762px;background:#101010"></div>

</body></html>
